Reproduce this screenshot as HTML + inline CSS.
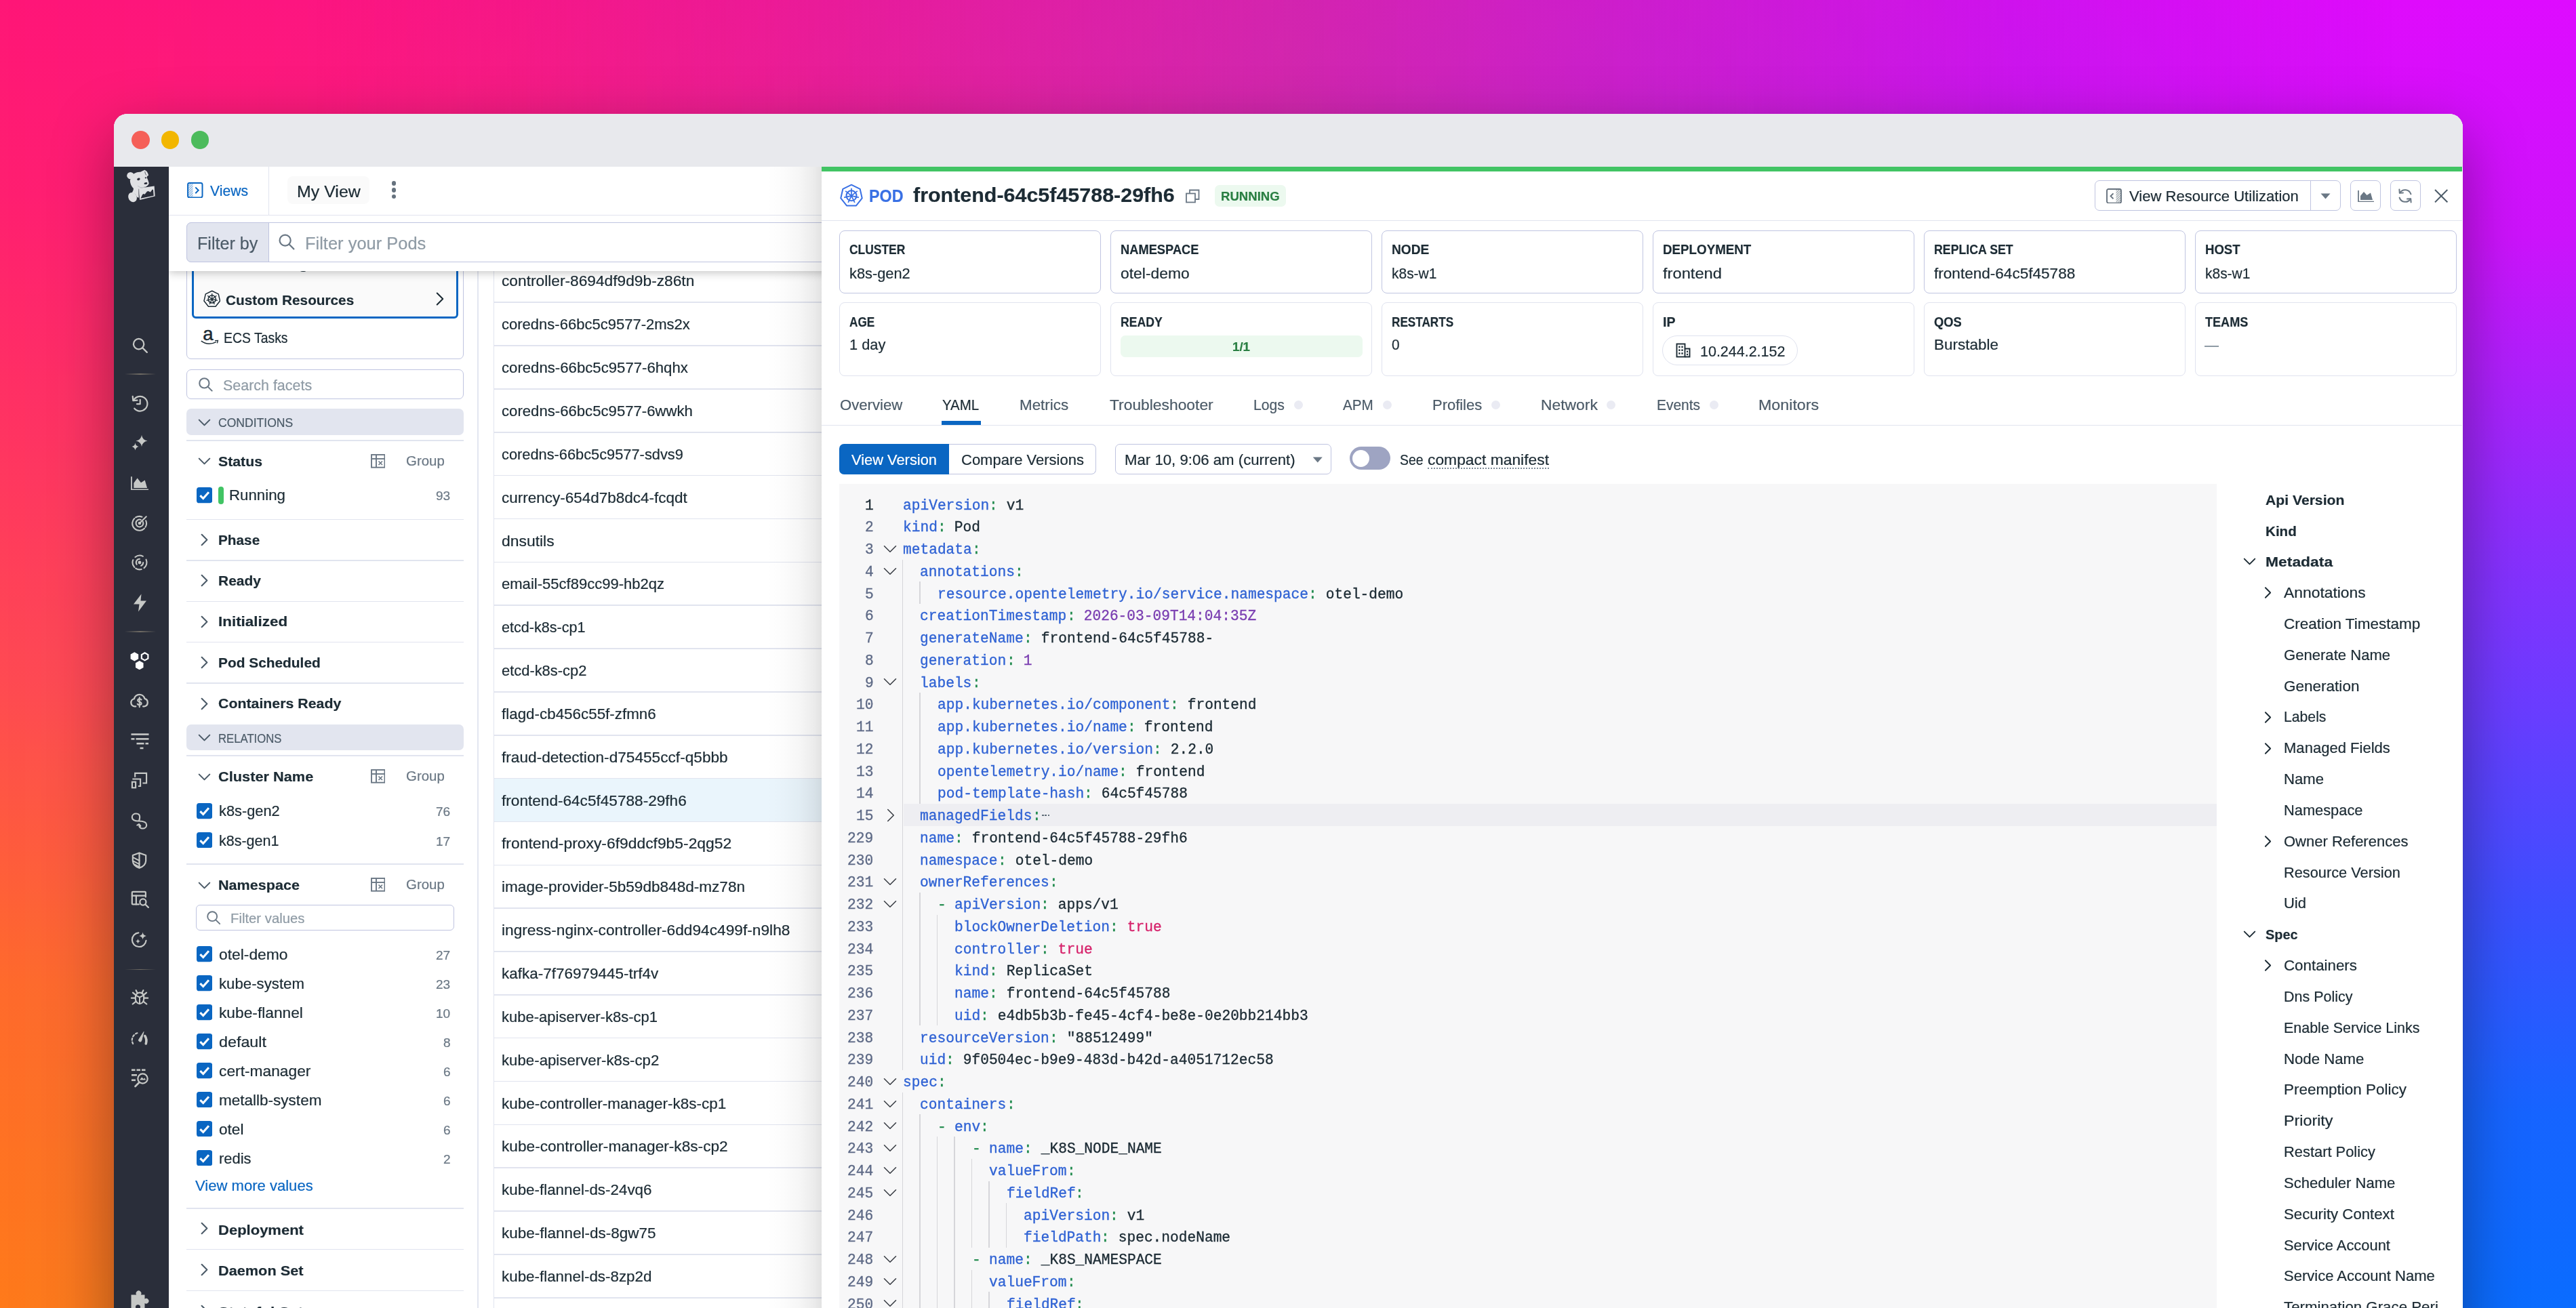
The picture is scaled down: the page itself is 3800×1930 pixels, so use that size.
<!DOCTYPE html>
<html><head><meta charset="utf-8"><title>Pod detail</title><style>
html,body{margin:0;padding:0;}
body{width:3800px;height:1930px;overflow:hidden;position:relative;font-family:"Liberation Sans",sans-serif;background:#c020d0;}
#bg,#bg2{position:absolute;left:0;top:0;width:3800px;height:1930px;}
#bg{background:linear-gradient(to bottom,#ff1677 0%,#ff1f70 15%,#ff4a52 52%,#ff6a2c 75%,#ff7a1a 100%);}
#bg2{background:linear-gradient(to bottom,#de0bff 0%,#cc13fb 18%,#8e2dfd 40%,#6a3cff 54%,#3a50ff 70%,#1664ff 85%,#0a6cff 100%);-webkit-mask-image:linear-gradient(to right,rgba(0,0,0,0) 0%,rgba(0,0,0,.12) 20%,rgba(0,0,0,.5) 50%,rgba(0,0,0,.9) 80%,#000 97%);mask-image:linear-gradient(to right,rgba(0,0,0,0) 0%,rgba(0,0,0,.12) 20%,rgba(0,0,0,.5) 50%,rgba(0,0,0,.9) 80%,#000 97%);}
#bg3{position:absolute;left:0;top:0;width:3800px;height:420px;background:linear-gradient(to right,rgba(160,80,140,0) 12%,rgba(160,80,140,.12) 30%,rgba(155,80,150,.32) 50%,rgba(140,65,195,.30) 64%,rgba(120,50,235,.18) 78%,rgba(120,50,240,0) 93%);-webkit-mask-image:linear-gradient(to bottom,#000 0%,#000 45%,rgba(0,0,0,0) 100%);}
.b{position:absolute;display:block;}
.t{position:absolute;white-space:nowrap;transform-origin:0 0;font-kerning:normal;-webkit-text-stroke:0.22px currentColor;}
.m{position:absolute;white-space:pre;font-family:"Liberation Mono",monospace;font-size:21.2px;line-height:32px;-webkit-text-stroke:0.35px currentColor;transform-origin:0 0;transform:scaleX(1.0004);}
</style></head><body>
<div id="bg"></div><div id="bg2"></div><div id="bg3"></div>
<div class="b" style="left:167.50px;top:168.00px;width:3465.00px;height:1900.00px;background:#fff;border-radius:20px 20px 0 0;box-shadow:0 30px 90px 0px rgba(0,0,0,.36);"></div>
<div class="b" style="left:167.50px;top:168.00px;width:3465.00px;height:79.00px;background:#e8e9ed;border-radius:20px 20px 0 0;"></div>
<div class="b" style="left:194.00px;top:193.30px;width:26.60px;height:26.60px;background:#f55f58;border-radius:14px;"></div>
<div class="b" style="left:237.90px;top:193.30px;width:26.60px;height:26.60px;background:#f2b600;border-radius:14px;"></div>
<div class="b" style="left:281.70px;top:193.30px;width:26.60px;height:26.60px;background:#4cbb5c;border-radius:14px;"></div>
<div class="b" style="left:167.50px;top:246.00px;width:81.00px;height:1700.00px;background:#2a2e3a;"></div>
<div class="b" style="left:275.40px;top:380.00px;width:408.50px;height:150.10px;border:1.5px solid #bfc4e0;border-radius:7px;box-sizing:border-box;"></div>
<div class="b" style="left:283.30px;top:380.00px;width:392.50px;height:90.00px;background:#fafafa;border:3px solid #0a66c2;border-radius:6px;box-sizing:border-box;"></div>
<svg class="b" style="left:299.95px;top:428.45px;" width="25.50" height="25.50" viewBox="0 0 24 24"><g fill="none" stroke="#1c2b34" stroke-width="1.41" stroke-linejoin="round"><polygon points="12.00,1.20 20.91,5.49 23.11,15.14 16.95,22.87 7.05,22.87 0.89,15.14 3.09,5.49"/><circle cx="12" cy="12.6" r="5.3"/><g stroke-width="1.20"><line x1="12" y1="12.6" x2="12.00" y2="4.70"/><line x1="12" y1="12.6" x2="18.18" y2="7.67"/><line x1="12" y1="12.6" x2="19.70" y2="14.36"/><line x1="12" y1="12.6" x2="15.43" y2="19.72"/><line x1="12" y1="12.6" x2="8.57" y2="19.72"/><line x1="12" y1="12.6" x2="4.30" y2="14.36"/><line x1="12" y1="12.6" x2="5.82" y2="7.67"/></g></g></svg>
<span class="t" style="left:333.00px;top:428.00px;font-size:20.65px;line-height:29px;color:#1c2b34;transform:scaleX(1.0058);font-weight:700;">Custom Resources</span>
<svg class="b" style="left:631.50px;top:424.20px;" width="34.00" height="34.00" viewBox="-17 -17 34 34"><polyline points="-4.25,-8.5 4.25,0 -4.25,8.5" fill="none" stroke="#1c2b34" stroke-width="2.1" stroke-linecap="round" stroke-linejoin="round"/></svg>
<span class="t" style="left:441.00px;top:375.00px;font-size:20.65px;line-height:29px;color:#1c2b34;transform:scaleX(1.0300);font-weight:700;">g</span>
<svg class="b" style="left:296.00px;top:483.00px;" width="27.00" height="28.00" viewBox="0 0 27 28"><text x="3.2" y="18.6" font-family="Liberation Sans" font-weight="400" font-size="27.5" fill="#1c2b34" stroke="#1c2b34" stroke-width="0.5">a</text><path d="M0.8 20.2 Q11 27.5 22.8 21.6" fill="none" stroke="#1c2b34" stroke-width="1.6"/><path d="M21 19.6l4.4 -0.2-1 4" fill="none" stroke="#1c2b34" stroke-width="1.4"/></svg>
<span class="t" style="left:329.90px;top:484.00px;font-size:21.17px;line-height:30px;color:#1c2b34;transform:scaleX(0.9172);">ECS Tasks</span>
<div class="b" style="left:275.40px;top:545.00px;width:408.50px;height:44.30px;border:1.5px solid #bfc4e0;border-radius:7px;box-sizing:border-box;"></div>
<svg class="b" style="left:291.55px;top:556.25px;" width="22.50" height="22.50" viewBox="0 0 24 24"><circle cx="10" cy="10" r="7.6" fill="none" stroke="#6b7885" stroke-width="2.24"/><line x1="15.6" y1="15.6" x2="22" y2="22" stroke="#6b7885" stroke-width="2.24" stroke-linecap="round"/></svg>
<span class="t" style="left:329.10px;top:554.00px;font-size:21.17px;line-height:30px;color:#8f9ba5;transform:scaleX(1.0136);">Search facets</span>
<div class="b" style="left:275.40px;top:603.30px;width:408.50px;height:38.40px;background:#e2e5ef;border-radius:7px;"></div>
<svg class="b" style="left:285.50px;top:607.50px;" width="31.00" height="31.00" viewBox="-15.5 -15.5 31.0 31.0"><polyline points="-7.75,-3.875 0,3.875 7.75,-3.875" fill="none" stroke="#4c5b68" stroke-width="2.1" stroke-linecap="round" stroke-linejoin="round"/></svg>
<span class="t" style="left:321.50px;top:612.00px;font-size:18.14px;line-height:25px;color:#4c5b68;transform:scaleX(0.9686);">CONDITIONS</span>
<div class="b" style="left:275.40px;top:649.20px;width:408.50px;height:1.50px;background:#e1e4ef;"></div>
<svg class="b" style="left:285.50px;top:665.10px;" width="31.00" height="31.00" viewBox="-15.5 -15.5 31.0 31.0"><polyline points="-7.75,-3.875 0,3.875 7.75,-3.875" fill="none" stroke="#4c5b68" stroke-width="2.1" stroke-linecap="round" stroke-linejoin="round"/></svg>
<span class="t" style="left:321.50px;top:666.00px;font-size:20.65px;line-height:29px;color:#1c2b34;transform:scaleX(1.0299);font-weight:700;">Status</span>
<svg class="b" style="left:546.50px;top:670.10px;" width="21.50" height="20.70" viewBox="0 0 21.5 20.7"><g fill="none" stroke="#6b7885" stroke-width="1.9"><rect x="1" y="1" width="19.5" height="18.7"/><line x1="1" y1="7" x2="20.5" y2="7"/><line x1="8" y1="1" x2="8" y2="19.7"/><path d="M11.5 10.5l5.5 5.5M17 10.5l-5.5 5.5" stroke-width="1.7"/></g></svg>
<span class="t" style="left:598.90px;top:666.00px;font-size:19.68px;line-height:28px;color:#6b7885;transform:scaleX(1.0385);">Group</span>
<svg class="b" style="left:289.50px;top:719.40px;" width="23.30" height="23.30" viewBox="0 0 24 24"><rect x="0" y="0" width="24" height="24" rx="4" fill="#0a66c2"/><polyline points="5.5,12.5 10,17 18.5,7.5" fill="none" stroke="#fff" stroke-width="3.2" stroke-linecap="butt" stroke-linejoin="miter"/></svg>
<div class="b" style="left:322.40px;top:718.00px;width:7.80px;height:25.70px;background:#41c464;border-radius:4px;"></div>
<span class="t" style="left:338.10px;top:716.00px;font-size:21.17px;line-height:30px;color:#1c2b34;transform:scaleX(1.0525);">Running</span>
<span class="t" style="left:642.93px;top:720.00px;font-size:18.14px;line-height:25px;color:#6b7885;transform:scaleX(1.0540);">93</span>
<div class="b" style="left:275.40px;top:765.70px;width:408.50px;height:1.50px;background:#e1e4ef;"></div>
<svg class="b" style="left:285.50px;top:780.90px;" width="31.00" height="31.00" viewBox="-15.5 -15.5 31.0 31.0"><polyline points="-3.875,-7.75 3.875,0 -3.875,7.75" fill="none" stroke="#4c5b68" stroke-width="2.1" stroke-linecap="round" stroke-linejoin="round"/></svg>
<span class="t" style="left:321.50px;top:782.00px;font-size:20.65px;line-height:29px;color:#1c2b34;transform:scaleX(1.0059);font-weight:700;">Phase</span>
<div class="b" style="left:275.40px;top:826.10px;width:408.50px;height:1.50px;background:#e1e4ef;"></div>
<svg class="b" style="left:285.50px;top:841.30px;" width="31.00" height="31.00" viewBox="-15.5 -15.5 31.0 31.0"><polyline points="-3.875,-7.75 3.875,0 -3.875,7.75" fill="none" stroke="#4c5b68" stroke-width="2.1" stroke-linecap="round" stroke-linejoin="round"/></svg>
<span class="t" style="left:321.50px;top:842.00px;font-size:20.65px;line-height:29px;color:#1c2b34;transform:scaleX(1.0148);font-weight:700;">Ready</span>
<div class="b" style="left:275.40px;top:886.50px;width:408.50px;height:1.50px;background:#e1e4ef;"></div>
<svg class="b" style="left:285.50px;top:901.70px;" width="31.00" height="31.00" viewBox="-15.5 -15.5 31.0 31.0"><polyline points="-3.875,-7.75 3.875,0 -3.875,7.75" fill="none" stroke="#4c5b68" stroke-width="2.1" stroke-linecap="round" stroke-linejoin="round"/></svg>
<span class="t" style="left:321.50px;top:902.00px;font-size:20.65px;line-height:29px;color:#1c2b34;transform:scaleX(1.0863);font-weight:700;">Initialized</span>
<div class="b" style="left:275.40px;top:946.90px;width:408.50px;height:1.50px;background:#e1e4ef;"></div>
<svg class="b" style="left:285.50px;top:962.10px;" width="31.00" height="31.00" viewBox="-15.5 -15.5 31.0 31.0"><polyline points="-3.875,-7.75 3.875,0 -3.875,7.75" fill="none" stroke="#4c5b68" stroke-width="2.1" stroke-linecap="round" stroke-linejoin="round"/></svg>
<span class="t" style="left:321.50px;top:963.00px;font-size:20.65px;line-height:29px;color:#1c2b34;transform:scaleX(1.0110);font-weight:700;">Pod Scheduled</span>
<div class="b" style="left:275.40px;top:1007.30px;width:408.50px;height:1.50px;background:#e1e4ef;"></div>
<svg class="b" style="left:285.50px;top:1022.50px;" width="31.00" height="31.00" viewBox="-15.5 -15.5 31.0 31.0"><polyline points="-3.875,-7.75 3.875,0 -3.875,7.75" fill="none" stroke="#4c5b68" stroke-width="2.1" stroke-linecap="round" stroke-linejoin="round"/></svg>
<span class="t" style="left:321.50px;top:1023.00px;font-size:20.65px;line-height:29px;color:#1c2b34;transform:scaleX(1.0332);font-weight:700;">Containers Ready</span>
<div class="b" style="left:275.40px;top:1068.90px;width:408.50px;height:38.40px;background:#e2e5ef;border-radius:7px;"></div>
<svg class="b" style="left:285.50px;top:1073.10px;" width="31.00" height="31.00" viewBox="-15.5 -15.5 31.0 31.0"><polyline points="-7.75,-3.875 0,3.875 7.75,-3.875" fill="none" stroke="#4c5b68" stroke-width="2.1" stroke-linecap="round" stroke-linejoin="round"/></svg>
<span class="t" style="left:321.50px;top:1078.00px;font-size:18.14px;line-height:25px;color:#4c5b68;transform:scaleX(0.9214);">RELATIONS</span>
<div class="b" style="left:275.40px;top:1114.00px;width:408.50px;height:1.50px;background:#e1e4ef;"></div>
<svg class="b" style="left:285.50px;top:1131.00px;" width="31.00" height="31.00" viewBox="-15.5 -15.5 31.0 31.0"><polyline points="-7.75,-3.875 0,3.875 7.75,-3.875" fill="none" stroke="#4c5b68" stroke-width="2.1" stroke-linecap="round" stroke-linejoin="round"/></svg>
<span class="t" style="left:321.50px;top:1131.00px;font-size:20.65px;line-height:29px;color:#1c2b34;transform:scaleX(1.0539);font-weight:700;">Cluster Name</span>
<svg class="b" style="left:546.50px;top:1135.00px;" width="21.50" height="20.70" viewBox="0 0 21.5 20.7"><g fill="none" stroke="#6b7885" stroke-width="1.9"><rect x="1" y="1" width="19.5" height="18.7"/><line x1="1" y1="7" x2="20.5" y2="7"/><line x1="8" y1="1" x2="8" y2="19.7"/><path d="M11.5 10.5l5.5 5.5M17 10.5l-5.5 5.5" stroke-width="1.7"/></g></svg>
<span class="t" style="left:598.90px;top:1131.00px;font-size:19.68px;line-height:28px;color:#6b7885;transform:scaleX(1.0385);">Group</span>
<svg class="b" style="left:289.50px;top:1185.40px;" width="23.30" height="23.30" viewBox="0 0 24 24"><rect x="0" y="0" width="24" height="24" rx="4" fill="#0a66c2"/><polyline points="5.5,12.5 10,17 18.5,7.5" fill="none" stroke="#fff" stroke-width="3.2" stroke-linecap="butt" stroke-linejoin="miter"/></svg>
<span class="t" style="left:323.00px;top:1182.00px;font-size:21.17px;line-height:30px;color:#1c2b34;transform:scaleX(1.0300);">k8s-gen2</span>
<span class="t" style="left:642.93px;top:1186.00px;font-size:18.14px;line-height:25px;color:#6b7885;transform:scaleX(1.0540);">76</span>
<svg class="b" style="left:289.50px;top:1228.20px;" width="23.30" height="23.30" viewBox="0 0 24 24"><rect x="0" y="0" width="24" height="24" rx="4" fill="#0a66c2"/><polyline points="5.5,12.5 10,17 18.5,7.5" fill="none" stroke="#fff" stroke-width="3.2" stroke-linecap="butt" stroke-linejoin="miter"/></svg>
<span class="t" style="left:323.00px;top:1226.00px;font-size:21.17px;line-height:30px;color:#1c2b34;transform:scaleX(1.0162);">k8s-gen1</span>
<span class="t" style="left:642.93px;top:1230.00px;font-size:18.14px;line-height:25px;color:#6b7885;transform:scaleX(1.0540);">17</span>
<div class="b" style="left:275.40px;top:1274.00px;width:408.50px;height:1.50px;background:#e1e4ef;"></div>
<svg class="b" style="left:285.50px;top:1291.00px;" width="31.00" height="31.00" viewBox="-15.5 -15.5 31.0 31.0"><polyline points="-7.75,-3.875 0,3.875 7.75,-3.875" fill="none" stroke="#4c5b68" stroke-width="2.1" stroke-linecap="round" stroke-linejoin="round"/></svg>
<span class="t" style="left:321.50px;top:1291.00px;font-size:20.65px;line-height:29px;color:#1c2b34;transform:scaleX(1.0453);font-weight:700;">Namespace</span>
<svg class="b" style="left:546.50px;top:1295.00px;" width="21.50" height="20.70" viewBox="0 0 21.5 20.7"><g fill="none" stroke="#6b7885" stroke-width="1.9"><rect x="1" y="1" width="19.5" height="18.7"/><line x1="1" y1="7" x2="20.5" y2="7"/><line x1="8" y1="1" x2="8" y2="19.7"/><path d="M11.5 10.5l5.5 5.5M17 10.5l-5.5 5.5" stroke-width="1.7"/></g></svg>
<span class="t" style="left:598.90px;top:1291.00px;font-size:19.68px;line-height:28px;color:#6b7885;transform:scaleX(1.0385);">Group</span>
<div class="b" style="left:288.60px;top:1335.30px;width:381.70px;height:37.30px;border:1.5px solid #bfc4e0;border-radius:6px;box-sizing:border-box;"></div>
<svg class="b" style="left:304.00px;top:1343.00px;" width="22.00" height="22.00" viewBox="0 0 24 24"><circle cx="10" cy="10" r="7.6" fill="none" stroke="#6b7885" stroke-width="2.07"/><line x1="15.6" y1="15.6" x2="22" y2="22" stroke="#6b7885" stroke-width="2.07" stroke-linecap="round"/></svg>
<span class="t" style="left:339.60px;top:1341.00px;font-size:19.68px;line-height:28px;color:#8f9ba5;transform:scaleX(1.0322);">Filter values</span>
<svg class="b" style="left:289.50px;top:1396.40px;" width="23.30" height="23.30" viewBox="0 0 24 24"><rect x="0" y="0" width="24" height="24" rx="4" fill="#0a66c2"/><polyline points="5.5,12.5 10,17 18.5,7.5" fill="none" stroke="#fff" stroke-width="3.2" stroke-linecap="butt" stroke-linejoin="miter"/></svg>
<span class="t" style="left:323.00px;top:1394.00px;font-size:21.17px;line-height:30px;color:#1c2b34;transform:scaleX(1.0793);">otel-demo</span>
<span class="t" style="left:642.93px;top:1398.00px;font-size:18.14px;line-height:25px;color:#6b7885;transform:scaleX(1.0540);">27</span>
<svg class="b" style="left:289.50px;top:1439.36px;" width="23.30" height="23.30" viewBox="0 0 24 24"><rect x="0" y="0" width="24" height="24" rx="4" fill="#0a66c2"/><polyline points="5.5,12.5 10,17 18.5,7.5" fill="none" stroke="#fff" stroke-width="3.2" stroke-linecap="butt" stroke-linejoin="miter"/></svg>
<span class="t" style="left:323.00px;top:1437.00px;font-size:21.17px;line-height:30px;color:#1c2b34;transform:scaleX(1.0500);">kube-system</span>
<span class="t" style="left:642.93px;top:1441.00px;font-size:18.14px;line-height:25px;color:#6b7885;transform:scaleX(1.0540);">23</span>
<svg class="b" style="left:289.50px;top:1482.32px;" width="23.30" height="23.30" viewBox="0 0 24 24"><rect x="0" y="0" width="24" height="24" rx="4" fill="#0a66c2"/><polyline points="5.5,12.5 10,17 18.5,7.5" fill="none" stroke="#fff" stroke-width="3.2" stroke-linecap="butt" stroke-linejoin="miter"/></svg>
<span class="t" style="left:323.00px;top:1480.00px;font-size:21.17px;line-height:30px;color:#1c2b34;transform:scaleX(1.0751);">kube-flannel</span>
<span class="t" style="left:642.93px;top:1484.00px;font-size:18.14px;line-height:25px;color:#6b7885;transform:scaleX(1.0540);">10</span>
<svg class="b" style="left:289.50px;top:1525.28px;" width="23.30" height="23.30" viewBox="0 0 24 24"><rect x="0" y="0" width="24" height="24" rx="4" fill="#0a66c2"/><polyline points="5.5,12.5 10,17 18.5,7.5" fill="none" stroke="#fff" stroke-width="3.2" stroke-linecap="butt" stroke-linejoin="miter"/></svg>
<span class="t" style="left:323.00px;top:1523.00px;font-size:21.17px;line-height:30px;color:#1c2b34;transform:scaleX(1.1013);">default</span>
<span class="t" style="left:653.57px;top:1527.00px;font-size:18.14px;line-height:25px;color:#6b7885;transform:scaleX(1.0540);">8</span>
<svg class="b" style="left:289.50px;top:1568.24px;" width="23.30" height="23.30" viewBox="0 0 24 24"><rect x="0" y="0" width="24" height="24" rx="4" fill="#0a66c2"/><polyline points="5.5,12.5 10,17 18.5,7.5" fill="none" stroke="#fff" stroke-width="3.2" stroke-linecap="butt" stroke-linejoin="miter"/></svg>
<span class="t" style="left:323.00px;top:1566.00px;font-size:21.17px;line-height:30px;color:#1c2b34;transform:scaleX(1.0763);">cert-manager</span>
<span class="t" style="left:653.57px;top:1570.00px;font-size:18.14px;line-height:25px;color:#6b7885;transform:scaleX(1.0540);">6</span>
<svg class="b" style="left:289.50px;top:1611.20px;" width="23.30" height="23.30" viewBox="0 0 24 24"><rect x="0" y="0" width="24" height="24" rx="4" fill="#0a66c2"/><polyline points="5.5,12.5 10,17 18.5,7.5" fill="none" stroke="#fff" stroke-width="3.2" stroke-linecap="butt" stroke-linejoin="miter"/></svg>
<span class="t" style="left:323.00px;top:1609.00px;font-size:21.17px;line-height:30px;color:#1c2b34;transform:scaleX(1.0644);">metallb-system</span>
<span class="t" style="left:653.57px;top:1613.00px;font-size:18.14px;line-height:25px;color:#6b7885;transform:scaleX(1.0540);">6</span>
<svg class="b" style="left:289.50px;top:1654.16px;" width="23.30" height="23.30" viewBox="0 0 24 24"><rect x="0" y="0" width="24" height="24" rx="4" fill="#0a66c2"/><polyline points="5.5,12.5 10,17 18.5,7.5" fill="none" stroke="#fff" stroke-width="3.2" stroke-linecap="butt" stroke-linejoin="miter"/></svg>
<span class="t" style="left:323.00px;top:1652.00px;font-size:21.17px;line-height:30px;color:#1c2b34;transform:scaleX(1.0694);">otel</span>
<span class="t" style="left:653.57px;top:1656.00px;font-size:18.14px;line-height:25px;color:#6b7885;transform:scaleX(1.0540);">6</span>
<svg class="b" style="left:289.50px;top:1697.12px;" width="23.30" height="23.30" viewBox="0 0 24 24"><rect x="0" y="0" width="24" height="24" rx="4" fill="#0a66c2"/><polyline points="5.5,12.5 10,17 18.5,7.5" fill="none" stroke="#fff" stroke-width="3.2" stroke-linecap="butt" stroke-linejoin="miter"/></svg>
<span class="t" style="left:323.00px;top:1695.00px;font-size:21.17px;line-height:30px;color:#1c2b34;transform:scaleX(1.0352);">redis</span>
<span class="t" style="left:653.57px;top:1699.00px;font-size:18.14px;line-height:25px;color:#6b7885;transform:scaleX(1.0540);">2</span>
<span class="t" style="left:288.00px;top:1735.00px;font-size:21.17px;line-height:30px;color:#0a66c2;transform:scaleX(1.0426);">View more values</span>
<div class="b" style="left:275.40px;top:1782.20px;width:408.50px;height:1.50px;background:#e1e4ef;"></div>
<svg class="b" style="left:285.50px;top:1797.40px;" width="31.00" height="31.00" viewBox="-15.5 -15.5 31.0 31.0"><polyline points="-3.875,-7.75 3.875,0 -3.875,7.75" fill="none" stroke="#4c5b68" stroke-width="2.1" stroke-linecap="round" stroke-linejoin="round"/></svg>
<span class="t" style="left:321.50px;top:1800.00px;font-size:20.65px;line-height:29px;color:#1c2b34;transform:scaleX(1.0661);font-weight:700;">Deployment</span>
<div class="b" style="left:275.40px;top:1842.90px;width:408.50px;height:1.50px;background:#e1e4ef;"></div>
<svg class="b" style="left:285.50px;top:1858.10px;" width="31.00" height="31.00" viewBox="-15.5 -15.5 31.0 31.0"><polyline points="-3.875,-7.75 3.875,0 -3.875,7.75" fill="none" stroke="#4c5b68" stroke-width="2.1" stroke-linecap="round" stroke-linejoin="round"/></svg>
<span class="t" style="left:321.50px;top:1860.00px;font-size:20.65px;line-height:29px;color:#1c2b34;transform:scaleX(1.0516);font-weight:700;">Daemon Set</span>
<div class="b" style="left:275.40px;top:1903.60px;width:408.50px;height:1.50px;background:#e1e4ef;"></div>
<svg class="b" style="left:285.50px;top:1918.80px;" width="31.00" height="31.00" viewBox="-15.5 -15.5 31.0 31.0"><polyline points="-3.875,-7.75 3.875,0 -3.875,7.75" fill="none" stroke="#4c5b68" stroke-width="2.1" stroke-linecap="round" stroke-linejoin="round"/></svg>
<span class="t" style="left:321.50px;top:1921.00px;font-size:20.65px;line-height:29px;color:#1c2b34;transform:scaleX(1.1004);font-weight:700;">Stateful Set</span>
<div class="b" style="left:704.00px;top:400.00px;width:1.50px;height:1600.00px;background:#e3e6f0;"></div>
<div class="b" style="left:727.60px;top:400.00px;width:1.50px;height:1600.00px;background:#e1e4ef;"></div>
<div class="b" style="left:727.60px;top:445.45px;width:500.00px;height:1.60px;background:#e1e4ef;"></div>
<span class="t" style="left:740.00px;top:400.00px;font-size:21.17px;line-height:30px;color:#1c2b34;transform:scaleX(1.0744);">controller-8694df9d9b-z86tn</span>
<div class="b" style="left:727.60px;top:509.30px;width:500.00px;height:1.60px;background:#e1e4ef;"></div>
<span class="t" style="left:740.00px;top:464.00px;font-size:21.17px;line-height:30px;color:#1c2b34;transform:scaleX(1.0407);">coredns-66bc5c9577-2ms2x</span>
<div class="b" style="left:727.60px;top:573.15px;width:500.00px;height:1.60px;background:#e1e4ef;"></div>
<span class="t" style="left:740.00px;top:528.00px;font-size:21.17px;line-height:30px;color:#1c2b34;transform:scaleX(1.0478);">coredns-66bc5c9577-6hqhx</span>
<div class="b" style="left:727.60px;top:637.00px;width:500.00px;height:1.60px;background:#e1e4ef;"></div>
<span class="t" style="left:740.00px;top:592.00px;font-size:21.17px;line-height:30px;color:#1c2b34;transform:scaleX(1.0468);">coredns-66bc5c9577-6wwkh</span>
<div class="b" style="left:727.60px;top:700.85px;width:500.00px;height:1.60px;background:#e1e4ef;"></div>
<span class="t" style="left:740.00px;top:656.00px;font-size:21.17px;line-height:30px;color:#1c2b34;transform:scaleX(1.0305);">coredns-66bc5c9577-sdvs9</span>
<div class="b" style="left:727.60px;top:764.70px;width:500.00px;height:1.60px;background:#e1e4ef;"></div>
<span class="t" style="left:740.00px;top:720.00px;font-size:21.17px;line-height:30px;color:#1c2b34;transform:scaleX(1.0628);">currency-654d7b8dc4-fcqdt</span>
<div class="b" style="left:727.60px;top:828.55px;width:500.00px;height:1.60px;background:#e1e4ef;"></div>
<span class="t" style="left:740.00px;top:784.00px;font-size:21.17px;line-height:30px;color:#1c2b34;transform:scaleX(1.0825);">dnsutils</span>
<div class="b" style="left:727.60px;top:892.40px;width:500.00px;height:1.60px;background:#e1e4ef;"></div>
<span class="t" style="left:740.00px;top:847.00px;font-size:21.17px;line-height:30px;color:#1c2b34;transform:scaleX(1.0418);">email-55cf89cc99-hb2qz</span>
<div class="b" style="left:727.60px;top:956.25px;width:500.00px;height:1.60px;background:#e1e4ef;"></div>
<span class="t" style="left:740.00px;top:911.00px;font-size:21.17px;line-height:30px;color:#1c2b34;transform:scaleX(1.0207);">etcd-k8s-cp1</span>
<div class="b" style="left:727.60px;top:1020.10px;width:500.00px;height:1.60px;background:#e1e4ef;"></div>
<span class="t" style="left:740.00px;top:975.00px;font-size:21.17px;line-height:30px;color:#1c2b34;transform:scaleX(1.0347);">etcd-k8s-cp2</span>
<div class="b" style="left:727.60px;top:1083.95px;width:500.00px;height:1.60px;background:#e1e4ef;"></div>
<span class="t" style="left:740.00px;top:1039.00px;font-size:21.17px;line-height:30px;color:#1c2b34;transform:scaleX(1.0583);">flagd-cb456c55f-zfmn6</span>
<div class="b" style="left:727.60px;top:1147.80px;width:500.00px;height:1.60px;background:#e1e4ef;"></div>
<span class="t" style="left:740.00px;top:1103.00px;font-size:21.17px;line-height:30px;color:#1c2b34;transform:scaleX(1.0706);">fraud-detection-d75455ccf-q5bbb</span>
<div class="b" style="left:729.10px;top:1149.30px;width:500.00px;height:63.05px;background:#eaf5fc;"></div>
<div class="b" style="left:727.60px;top:1211.65px;width:500.00px;height:1.60px;background:#e1e4ef;"></div>
<span class="t" style="left:740.00px;top:1167.00px;font-size:21.17px;line-height:30px;color:#1c2b34;transform:scaleX(1.0685);">frontend-64c5f45788-29fh6</span>
<div class="b" style="left:727.60px;top:1275.50px;width:500.00px;height:1.60px;background:#e1e4ef;"></div>
<span class="t" style="left:740.00px;top:1230.00px;font-size:21.17px;line-height:30px;color:#1c2b34;transform:scaleX(1.0801);">frontend-proxy-6f9ddcf9b5-2qg52</span>
<div class="b" style="left:727.60px;top:1339.35px;width:500.00px;height:1.60px;background:#e1e4ef;"></div>
<span class="t" style="left:740.00px;top:1294.00px;font-size:21.17px;line-height:30px;color:#1c2b34;transform:scaleX(1.0675);">image-provider-5b59db848d-mz78n</span>
<div class="b" style="left:727.60px;top:1403.20px;width:500.00px;height:1.60px;background:#e1e4ef;"></div>
<span class="t" style="left:740.00px;top:1358.00px;font-size:21.17px;line-height:30px;color:#1c2b34;transform:scaleX(1.0734);">ingress-nginx-controller-6dd94c499f-n9lh8</span>
<div class="b" style="left:727.60px;top:1467.05px;width:500.00px;height:1.60px;background:#e1e4ef;"></div>
<span class="t" style="left:740.00px;top:1422.00px;font-size:21.17px;line-height:30px;color:#1c2b34;transform:scaleX(1.0624);">kafka-7f76979445-trf4v</span>
<div class="b" style="left:727.60px;top:1530.90px;width:500.00px;height:1.60px;background:#e1e4ef;"></div>
<span class="t" style="left:740.00px;top:1486.00px;font-size:21.17px;line-height:30px;color:#1c2b34;transform:scaleX(1.0402);">kube-apiserver-k8s-cp1</span>
<div class="b" style="left:727.60px;top:1594.75px;width:500.00px;height:1.60px;background:#e1e4ef;"></div>
<span class="t" style="left:740.00px;top:1550.00px;font-size:21.17px;line-height:30px;color:#1c2b34;transform:scaleX(1.0511);">kube-apiserver-k8s-cp2</span>
<div class="b" style="left:727.60px;top:1658.60px;width:500.00px;height:1.60px;background:#e1e4ef;"></div>
<span class="t" style="left:740.00px;top:1614.00px;font-size:21.17px;line-height:30px;color:#1c2b34;transform:scaleX(1.0632);">kube-controller-manager-k8s-cp1</span>
<div class="b" style="left:727.60px;top:1722.45px;width:500.00px;height:1.60px;background:#e1e4ef;"></div>
<span class="t" style="left:740.00px;top:1677.00px;font-size:21.17px;line-height:30px;color:#1c2b34;transform:scaleX(1.0709);">kube-controller-manager-k8s-cp2</span>
<div class="b" style="left:727.60px;top:1786.30px;width:500.00px;height:1.60px;background:#e1e4ef;"></div>
<span class="t" style="left:740.00px;top:1741.00px;font-size:21.17px;line-height:30px;color:#1c2b34;transform:scaleX(1.0579);">kube-flannel-ds-24vq6</span>
<div class="b" style="left:727.60px;top:1850.15px;width:500.00px;height:1.60px;background:#e1e4ef;"></div>
<span class="t" style="left:740.00px;top:1805.00px;font-size:21.17px;line-height:30px;color:#1c2b34;transform:scaleX(1.0631);">kube-flannel-ds-8gw75</span>
<div class="b" style="left:727.60px;top:1914.00px;width:500.00px;height:1.60px;background:#e1e4ef;"></div>
<span class="t" style="left:740.00px;top:1869.00px;font-size:21.17px;line-height:30px;color:#1c2b34;transform:scaleX(1.0579);">kube-flannel-ds-8zp2d</span>
<div class="b" style="left:727.60px;top:1977.85px;width:500.00px;height:1.60px;background:#e1e4ef;"></div>
<span class="t" style="left:740.00px;top:1933.00px;font-size:21.17px;line-height:30px;color:#1c2b34;transform:scaleX(1.2316);">kube-flannel-ds-x</span>
<div class="b" style="left:248.50px;top:246.00px;width:1300.00px;height:154.00px;background:#fff;box-shadow:0 3px 12px rgba(0,0,0,.22);"></div>
<div class="b" style="left:248.50px;top:316.70px;width:1300.00px;height:1.60px;background:#e1e4ef;"></div>
<div class="b" style="left:395.50px;top:246.00px;width:1.50px;height:71.00px;background:#e1e4ef;"></div>
<svg class="b" style="left:276.30px;top:268.80px;" width="23.60" height="23.60" viewBox="0 0 24 24"><defs><pattern id="hat" width="2.4" height="2.4" patternUnits="userSpaceOnUse" patternTransform="rotate(45)"><rect width="1.2" height="2.4" fill="#0a66c2" opacity=".55"/></pattern></defs><rect x="1.1" y="1.1" width="21.8" height="21.8" rx="2.5" fill="none" stroke="#0a66c2" stroke-width="2"/><rect x="2.2" y="2.2" width="6.5" height="19.6" fill="url(#hat)"/><polyline points="12.5,7.5 17,12 12.5,16.5" fill="none" stroke="#0a66c2" stroke-width="2"/></svg>
<span class="t" style="left:310.40px;top:267.00px;font-size:21.17px;line-height:30px;color:#0a66c2;transform:scaleX(0.9984);">Views</span>
<div class="b" style="left:424.00px;top:260.30px;width:120.80px;height:40.30px;background:#fafafa;border-radius:8px;"></div>
<span class="t" style="left:437.50px;top:266.00px;font-size:24.19px;line-height:34px;color:#1c2b34;transform:scaleX(1.0312);">My View</span>
<div class="b" style="left:577.60px;top:267.40px;width:6.80px;height:6.80px;background:#66727e;border-radius:4px;"></div>
<div class="b" style="left:577.60px;top:277.10px;width:6.80px;height:6.80px;background:#66727e;border-radius:4px;"></div>
<div class="b" style="left:577.60px;top:286.70px;width:6.80px;height:6.80px;background:#66727e;border-radius:4px;"></div>
<div class="b" style="left:275.40px;top:328.40px;width:121.60px;height:58.60px;background:#e2e5ef;border-radius:7px 0 0 7px;box-sizing:border-box;border-right:1.5px solid #bfc4e0;"></div>
<div class="b" style="left:275.40px;top:328.40px;width:1200.00px;height:58.60px;border:1.5px solid #bfc4e0;border-radius:7px;box-sizing:border-box;"></div>
<span class="t" style="left:291.10px;top:341.00px;font-size:25.62px;line-height:36px;color:#4c5b68;transform:scaleX(0.9801);">Filter by</span>
<svg class="b" style="left:409.85px;top:343.85px;" width="25.50" height="25.50" viewBox="0 0 24 24"><circle cx="10" cy="10" r="7.6" fill="none" stroke="#6b7885" stroke-width="2.07"/><line x1="15.6" y1="15.6" x2="22" y2="22" stroke="#6b7885" stroke-width="2.07" stroke-linecap="round"/></svg>
<span class="t" style="left:449.90px;top:341.00px;font-size:25.62px;line-height:36px;color:#8f9ba5;transform:scaleX(0.9944);">Filter your Pods</span>
<div class="b" style="left:167.50px;top:168.00px;width:3465.00px;height:78.00px;background:#e8e9ed;border-radius:20px 20px 0 0;"></div>
<div class="b" style="left:194.00px;top:193.30px;width:26.60px;height:26.60px;background:#f55f58;border-radius:14px;"></div>
<div class="b" style="left:237.90px;top:193.30px;width:26.60px;height:26.60px;background:#f2b600;border-radius:14px;"></div>
<div class="b" style="left:281.70px;top:193.30px;width:26.60px;height:26.60px;background:#4cbb5c;border-radius:14px;"></div>
<div class="b" style="left:167.50px;top:246.00px;width:81.00px;height:1700.00px;background:#2a2e3a;"></div>
<svg class="b" style="left:168.00px;top:246.00px;" width="80.00" height="80.00" viewBox="0 0 1308 1308"><g fill="#dfe0e3"><circle cx="400" cy="215" r="86"/><path d="M470 175 Q560 120 640 128 Q700 95 745 78 Q815 110 836 208 Q805 222 792 252 Q832 330 846 400 Q832 452 792 472 Q760 502 700 517 L592 527 L602 745 Q565 748 552 722 Q522 640 436 628 Q482 560 470 520 Q398 450 388 330 Q420 250 470 175Z"/><ellipse cx="450" cy="737" rx="100" ry="120" transform="rotate(-28 450 737)"/><polygon points="588,522 975,468 992,712 625,802"/></g><g fill="#2a2e3a"><polygon points="645,764 690,672 715,655 745,667 800,598 830,588 880,614 930,548 948,556 960,700"/><ellipse cx="595" cy="300" rx="38" ry="27" transform="rotate(-18 595 300)"/><ellipse cx="766" cy="268" rx="20" ry="15" transform="rotate(30 766 268)"/><ellipse cx="768" cy="402" rx="40" ry="24" transform="rotate(-8 768 402)"/><path d="M748 118 Q752 170 782 205" fill="none" stroke="#2a2e3a" stroke-width="12"/><path d="M600 535 L612 740" fill="none" stroke="#2a2e3a" stroke-width="7"/><path d="M575 462 Q640 520 700 505 Q740 490 760 470" fill="none" stroke="#2a2e3a" stroke-width="6" opacity=".6"/></g></svg>
<svg class="b" style="left:193.85px;top:497.25px;" width="25.50" height="25.50" viewBox="0 0 24 24"><g fill="none" stroke="#c6c8c6" stroke-width="1.9" stroke-linecap="round" stroke-linejoin="round"><circle cx="10" cy="10" r="7.2" stroke-width="2.1"/><line x1="15.4" y1="15.4" x2="21.5" y2="21.5" stroke-width="2.1"/></g></svg>
<div class="b" style="left:184.00px;top:551.20px;width:46.00px;height:1.60px;background:linear-gradient(to right,rgba(120,115,105,0),rgba(120,115,105,.9) 50%,rgba(120,115,105,0));"></div>
<svg class="b" style="left:192.20px;top:580.80px;" width="28.00" height="28.00" viewBox="0 0 24 24"><g fill="none" stroke="#c6c8c6" stroke-width="1.9" stroke-linecap="round" stroke-linejoin="round"><path d="M4.4 8A9.3 9.3 0 1 1 5.4 18.6"/><polyline points="3.2,3.4 3.7,8.7 9,8.2"/><polyline points="12.6,7.6 12.6,13 8.6,13"/></g></svg>
<svg class="b" style="left:192.20px;top:640.30px;" width="27.00" height="27.00" viewBox="0 0 27 27"><g fill="#c6c8c6"><path d="M17 2 Q18 9 25.5 10.5 Q18 12 17 19 Q16 12 8.5 10.5 Q16 9 17 2Z"/><path d="M7.5 13.5 Q8.2 18 12.5 19 Q8.2 20 7.5 24.5 Q6.8 20 2.5 19 Q6.8 18 7.5 13.5Z"/></g></svg>
<svg class="b" style="left:193.00px;top:702.50px;" width="26.00" height="20.50" viewBox="0 0 27 21"><path d="M1 0V20H27" fill="none" stroke="#c6c8c6" stroke-width="1.9"/><path d="M4.5 17.5V10L10 2.5L15.5 9.5L21.5 5.5L25 17.5Z" fill="#c6c8c6"/></svg>
<svg class="b" style="left:192.90px;top:758.60px;" width="26.00" height="26.00" viewBox="0 0 24 24"><g fill="none" stroke="#c6c8c6" stroke-width="1.9" stroke-linecap="round" stroke-linejoin="round"><path d="M20.5 8.6A9.6 9.6 0 1 1 15.2 3.4" stroke-dasharray="9 2.2 30 2.2 100"/><path d="M16.6 10.2A5 5 0 1 1 13.6 7.3"/><line x1="12" y1="12" x2="21" y2="3"/><circle cx="12" cy="12" r="1.2" fill="#c6c8c6"/></g></svg>
<svg class="b" style="left:192.90px;top:817.30px;" width="26.00" height="26.00" viewBox="0 0 24 24"><g fill="none" stroke="#c6c8c6" stroke-width="1.9" stroke-linecap="round" stroke-linejoin="round"><path d="M20.8 8A9.6 9.6 0 0 1 18 19.5" /><path d="M14.5 21.2A9.6 9.6 0 0 1 3 8.5" stroke-dasharray="8 2.4 20"/><path d="M6 4.6A9.6 9.6 0 0 1 16.5 3.5"/><path d="M16.8 12A4.8 4.8 0 0 1 14 16.4"/><path d="M8 14.6A4.8 4.8 0 0 1 12 7.2"/><circle cx="12" cy="12" r="1.3" fill="#c6c8c6"/></g></svg>
<svg class="b" style="left:195.60px;top:876.00px;" width="21.00" height="27.00" viewBox="0 0 21 27"><path d="M12.5 0.5L1 15.5H9.5L8 26.5L20 10.5H11.5Z" fill="#c6c8c6"/></svg>
<div class="b" style="left:184.00px;top:931.20px;width:46.00px;height:1.60px;background:linear-gradient(to right,rgba(120,115,105,0),rgba(120,115,105,.9) 50%,rgba(120,115,105,0));"></div>
<svg class="b" style="left:190.80px;top:960.80px;" width="29.50" height="27.50" viewBox="0 0 30 28"><polygon points="13.39,11.40 7.50,14.80 1.61,11.40 1.61,4.60 7.50,1.20 13.39,4.60" fill="#fff"/><polygon points="20.89,24.40 15.00,27.80 9.11,24.40 9.11,17.60 15.00,14.20 20.89,17.60" fill="#fff"/><polygon points="27.85,10.80 23.00,13.60 18.15,10.80 18.15,5.20 23.00,2.40 27.85,5.20" fill="none" stroke="#fff" stroke-width="2.2"/></svg>
<svg class="b" style="left:191.15px;top:1019.25px;" width="29.50" height="29.50" viewBox="0 0 24 24"><g fill="none" stroke="#c6c8c6" stroke-width="1.9" stroke-linecap="round" stroke-linejoin="round"><path d="M7.5 19H6.2A4.6 4.6 0 0 1 5.6 9.9A6.5 6.5 0 0 1 18.2 9.6A4.8 4.8 0 0 1 17.6 19H16.4"/><path d="M14.3 10.9C13.4 9.6 9.9 9.7 9.9 11.8C9.9 14 14.3 13.1 14.3 15.4C14.3 17.6 10.4 17.6 9.6 16.1" stroke-width="1.7"/><line x1="12" y1="8.2" x2="12" y2="19.8" stroke-width="1.6"/></g></svg>
<svg class="b" style="left:192.60px;top:1079.80px;" width="27.00" height="27.50" viewBox="0 0 27 26"><g fill="#c6c8c6"><rect x="0.5" y="1.5" width="26" height="2.6"/><rect x="0.5" y="8.3" width="5" height="2.6"/><rect x="7.5" y="8.3" width="19" height="2.6"/><rect x="8.5" y="15.1" width="11" height="2.6"/><rect x="21.5" y="15.1" width="4.5" height="2.6"/><rect x="13.5" y="21.9" width="5" height="2.6"/></g></svg>
<svg class="b" style="left:192.40px;top:1137.50px;" width="27.00" height="27.00" viewBox="0 0 24 24"><g fill="none" stroke="#c6c8c6" stroke-width="1.9" stroke-linecap="round" stroke-linejoin="round"><polyline points="6.4,7.8 6.4,2.6 21.4,2.6 21.4,15.6 16.4,15.6" stroke-linecap="butt" stroke-linejoin="miter"/><polyline points="3,10.2 13.4,10.2 13.4,19.6 10.6,19.6" stroke-linecap="butt" stroke-linejoin="miter"/><rect x="2.6" y="14" width="4.6" height="7.6" stroke-linejoin="miter"/></g></svg>
<svg class="b" style="left:192.40px;top:1197.50px;" width="27.00" height="27.00" viewBox="0 0 24 24"><g fill="none" stroke="#c6c8c6" stroke-width="1.9" stroke-linecap="round" stroke-linejoin="round"><path d="M11.5 12C6 12 2.5 10.4 2.5 6.9C2.5 3.6 5.2 2.2 7.8 2.2C10.6 2.2 12.6 3.8 12.6 6.6C12.6 8.8 12 10.6 11.5 12C15.5 12 21.5 13 21.5 17C21.5 20.4 18.8 21.8 16.4 21.8C13.4 21.8 11.6 19.6 11.8 17.2"/><polyline points="9.2,17.4 11.8,16 13.6,18.6"/></g></svg>
<svg class="b" style="left:192.40px;top:1256.10px;" width="27.00" height="27.00" viewBox="0 0 24 24"><g fill="none" stroke="#c6c8c6" stroke-width="1.9" stroke-linecap="round" stroke-linejoin="round"><path d="M12 2.2L20.6 5.4V12C20.6 17.2 16.8 20.4 12 22C7.2 20.4 3.4 17.2 3.4 12V5.4Z"/><line x1="12" y1="2.4" x2="12" y2="21.8"/><path d="M3.8 8.2L12 12.4M3.8 12.8L12 17M6 17.4L12 20.6" stroke-width="1.7"/></g></svg>
<svg class="b" style="left:191.90px;top:1313.30px;" width="28.00" height="28.00" viewBox="0 0 24 24"><g fill="none" stroke="#c6c8c6" stroke-width="1.9" stroke-linecap="round" stroke-linejoin="round"><path d="M11 18.4H3.4A1 1 0 0 1 2.4 17.4V3.4A1 1 0 0 1 3.4 2.4H18.6A1 1 0 0 1 19.6 3.4V9" stroke-linejoin="miter"/><line x1="2.4" y1="7.4" x2="19.6" y2="7.4"/><line x1="7.6" y1="7.4" x2="7.6" y2="18.4"/><circle cx="16.2" cy="15.4" r="3.9"/><line x1="19.2" y1="18.4" x2="23" y2="22.2"/></g></svg>
<svg class="b" style="left:192.40px;top:1372.90px;" width="27.00" height="27.00" viewBox="0 0 24 24"><g fill="none" stroke="#c6c8c6" stroke-width="1.9" stroke-linecap="round" stroke-linejoin="round"><path d="M20.9 13.2A9.2 9.2 0 1 1 11 3"/><polyline points="20.6,18.6 21,13.2 16,13.6" stroke-width="0"/><path d="M16.5 2.2Q17.1 6.3 21.2 7Q17.1 7.7 16.5 11.8Q15.9 7.7 11.8 7Q15.9 6.3 16.5 2.2Z" fill="#c6c8c6" stroke="none"/><path d="M10.2 11Q10.6 13.6 13.2 14Q10.6 14.4 10.2 17Q9.8 14.4 7.2 14Q9.8 13.6 10.2 11Z" fill="#c6c8c6" stroke="none"/></g></svg>
<div class="b" style="left:184.00px;top:1429.60px;width:46.00px;height:1.60px;background:linear-gradient(to right,rgba(120,115,105,0),rgba(120,115,105,.9) 50%,rgba(120,115,105,0));"></div>
<svg class="b" style="left:191.90px;top:1456.50px;" width="28.00" height="28.00" viewBox="0 0 24 24"><g fill="none" stroke="#c6c8c6" stroke-width="1.9" stroke-linecap="round" stroke-linejoin="round"><path d="M12 6.6C15.4 6.6 17.4 9.2 17.4 13.4C17.4 17.6 15.2 20.6 12 20.6C8.8 20.6 6.6 17.6 6.6 13.4C6.6 9.2 8.6 6.6 12 6.6Z"/><path d="M7.4 10.2L12 12.6L16.6 10.2M12 12.6V20.4" stroke-width="1.7"/><path d="M9.2 7.2L7.4 3.6M14.8 7.2L16.6 3.6M6.6 13.4H1.6M17.4 13.4H22.4M7.4 17.6L3.2 21M16.6 17.6L20.8 21M7.2 9.8L3.4 6.6M16.8 9.8L20.6 6.6"/></g></svg>
<svg class="b" style="left:192.15px;top:1517.95px;" width="27.50" height="27.50" viewBox="0 0 24 24"><g fill="none" stroke="#c6c8c6" stroke-width="1.9" stroke-linecap="round" stroke-linejoin="round"><path d="M3.6 19.2A9.6 9.6 0 0 1 10.2 5.2" stroke-dasharray="2.3 2.5"/><path d="M19 9.2C20.9 12 21.3 15.6 20.3 19.2" stroke-width="3.1"/><path d="M17.3 4.2L11.3 13.6A1.9 1.9 0 1 0 14.6 15.4Z" fill="#c6c8c6" stroke-width="0.8"/></g></svg>
<svg class="b" style="left:193.00px;top:1576.00px;" width="28.00" height="29.00" viewBox="0 0 28 29"><g fill="#c6c8c6"><rect x="1" y="1.5" width="5.5" height="2.6"/><rect x="8.5" y="1.5" width="5.5" height="2.6"/><rect x="16" y="1.5" width="5.5" height="2.6"/><rect x="1" y="9" width="8" height="2.6"/><rect x="1" y="16.5" width="6" height="2.6"/></g><circle cx="17.5" cy="15.5" r="7.2" fill="none" stroke="#c6c8c6" stroke-width="2.2"/><line x1="12" y1="21.5" x2="6.5" y2="27" stroke="#c6c8c6" stroke-width="2.6" stroke-linecap="round"/><path d="M13 17.5L16.2 13.5L18.6 16L20.4 14.4L22 17.5Z" fill="#c6c8c6"/></svg>
<svg class="b" style="left:192.00px;top:1898.00px;" width="30.00" height="32.00" viewBox="0 0 30 32"><path d="M1.5 12.5H9.2A3.9 3.9 0 1 1 15.8 12.5H21.5V18.4A3.9 3.9 0 1 1 21.5 25V32H14.8A3.6 3.6 0 1 0 8.2 32H1.5Z" fill="#c6c8c6"/></svg>
<div class="b" style="left:1129.60px;top:246.00px;width:82.00px;height:1700.00px;background:linear-gradient(to right,rgba(0,0,0,0) 0%,rgba(0,0,0,.012) 30%,rgba(0,0,0,.035) 60%,rgba(0,0,0,.075) 85%,rgba(0,0,0,.115) 100%);"></div>
<div class="b" style="left:1211.60px;top:246.00px;width:2420.90px;height:1700.00px;background:#fff;"></div>
<div class="b" style="left:1211.60px;top:245.60px;width:2420.90px;height:7.40px;background:#41c464;"></div>
<svg class="b" style="left:1238.50px;top:271.00px;" width="34.00" height="34.00" viewBox="0 0 24 24"><g fill="none" stroke="#3970e4" stroke-width="1.41" stroke-linejoin="round"><polygon points="12.00,1.20 20.91,5.49 23.11,15.14 16.95,22.87 7.05,22.87 0.89,15.14 3.09,5.49"/><circle cx="12" cy="12.6" r="5.3"/><g stroke-width="1.20"><line x1="12" y1="12.6" x2="12.00" y2="4.70"/><line x1="12" y1="12.6" x2="18.18" y2="7.67"/><line x1="12" y1="12.6" x2="19.70" y2="14.36"/><line x1="12" y1="12.6" x2="15.43" y2="19.72"/><line x1="12" y1="12.6" x2="8.57" y2="19.72"/><line x1="12" y1="12.6" x2="4.30" y2="14.36"/><line x1="12" y1="12.6" x2="5.82" y2="7.67"/></g></g></svg>
<span class="t" style="left:1282.00px;top:272.00px;font-size:25px;line-height:35px;color:#3970e4;transform:scaleX(0.9322);font-weight:700;">POD</span>
<span class="t" style="left:1347.00px;top:267.00px;font-size:29.6px;line-height:41px;color:#1c2b34;transform:scaleX(1.0286);font-weight:700;">frontend-64c5f45788-29fh6</span>
<svg class="b" style="left:1749.00px;top:278.50px;" width="21.00" height="21.00" viewBox="0 0 21 21"><g fill="none" stroke="#6b7885" stroke-width="1.8"><rect x="1" y="6.5" width="13" height="13"/><polyline points="6,6.5 6,1.5 19.5,1.5 19.5,15 14,15"/></g></svg>
<div class="b" style="left:1791.80px;top:272.60px;width:105.40px;height:32.00px;background:#ecf9ef;border-radius:7px;"></div>
<span class="t" style="left:1801.20px;top:278.00px;font-size:17.7px;line-height:25px;color:#2a7f43;transform:scaleX(1.0497);font-weight:700;">RUNNING</span>
<div class="b" style="left:3089.70px;top:265.80px;width:362.90px;height:45.20px;border:1.7px solid #bfc4e0;border-radius:7px;box-sizing:border-box;"></div>
<div class="b" style="left:3407.60px;top:265.80px;width:1.60px;height:45.20px;background:#bfc4e0;"></div>
<svg class="b" style="left:3107.00px;top:277.80px;" width="23.00" height="22.60" viewBox="0 0 23 22.6"><defs><pattern id="hat2" width="2.4" height="2.4" patternUnits="userSpaceOnUse" patternTransform="rotate(45)"><rect width="1.2" height="2.4" fill="#4c5b68" opacity=".6"/></pattern></defs><rect x="1" y="1" width="21" height="20.6" rx="2.4" fill="none" stroke="#66727e" stroke-width="1.9"/><rect x="14.5" y="2" width="6.5" height="18.6" fill="url(#hat2)"/><polyline points="10.5,7.3 6.5,11.3 10.5,15.3" fill="none" stroke="#66727e" stroke-width="1.9"/></svg>
<span class="t" style="left:3140.90px;top:275.00px;font-size:21.17px;line-height:30px;color:#1c2b34;transform:scaleX(1.0432);">View Resource Utilization</span>
<svg class="b" style="left:3423.00px;top:285.00px;" width="15.00" height="9.00" viewBox="0 0 15 9"><path d="M0.5 0.5H14.5L7.5 8.5Z" fill="#6b7885"/></svg>
<div class="b" style="left:3467.00px;top:265.80px;width:44.80px;height:45.20px;border:1.7px solid #bfc4e0;border-radius:7px;box-sizing:border-box;"></div>
<svg class="b" style="left:3477.50px;top:280.50px;" width="24.00" height="17.50" viewBox="0 0 24 17.5"><path d="M1 0V16.6H24" fill="none" stroke="#6b7885" stroke-width="1.8"/><path d="M4 14V8L9 2L13.5 7L19 3.5L22 14Z" fill="#6b7885"/></svg>
<div class="b" style="left:3526.00px;top:265.80px;width:44.80px;height:45.20px;border:1.7px solid #bfc4e0;border-radius:7px;box-sizing:border-box;"></div>
<svg class="b" style="left:3536.40px;top:277.00px;" width="24.00" height="24.00" viewBox="0 0 24 24"><g fill="none" stroke="#6b7885" stroke-width="2" stroke-linecap="round" stroke-linejoin="round"><path d="M20.4 9.4A9 9 0 0 0 4.2 7.4"/><polyline points="3.4,2.6 3.8,7.8 9,7.4"/><path d="M3.6 14.6A9 9 0 0 0 19.8 16.6"/><polyline points="20.6,21.4 20.2,16.2 15,16.6"/></g></svg>
<svg class="b" style="left:3590.50px;top:278.60px;" width="20.40" height="20.40" viewBox="0 0 20 20"><path d="M1 1L19 19M19 1L1 19" stroke="#4c5b68" stroke-width="2" fill="none"/></svg>
<div class="b" style="left:1211.60px;top:324.80px;width:2420.90px;height:1.50px;background:#e1e4ef;"></div>
<div class="b" style="left:1237.80px;top:340.00px;width:386.00px;height:92.60px;border:1.8px solid #c0c5e1;border-radius:8px;box-sizing:border-box;"></div>
<span class="t" style="left:1253.00px;top:354.00px;font-size:20.2px;line-height:28px;color:#1c2b34;transform:scaleX(0.8638);font-weight:700;">CLUSTER</span>
<span class="t" style="left:1253.00px;top:389.00px;font-size:21.17px;line-height:30px;color:#1c2b34;transform:scaleX(1.0300);">k8s-gen2</span>
<div class="b" style="left:1637.80px;top:340.00px;width:386.00px;height:92.60px;border:1.8px solid #c0c5e1;border-radius:8px;box-sizing:border-box;"></div>
<span class="t" style="left:1653.00px;top:354.00px;font-size:20.2px;line-height:28px;color:#1c2b34;transform:scaleX(0.9061);font-weight:700;">NAMESPACE</span>
<span class="t" style="left:1653.00px;top:389.00px;font-size:21.17px;line-height:30px;color:#1c2b34;transform:scaleX(1.0824);">otel-demo</span>
<div class="b" style="left:2037.80px;top:340.00px;width:386.00px;height:92.60px;border:1.8px solid #c0c5e1;border-radius:8px;box-sizing:border-box;"></div>
<span class="t" style="left:2053.00px;top:354.00px;font-size:20.2px;line-height:28px;color:#1c2b34;transform:scaleX(0.9475);font-weight:700;">NODE</span>
<span class="t" style="left:2053.00px;top:389.00px;font-size:21.17px;line-height:30px;color:#1c2b34;transform:scaleX(0.9902);">k8s-w1</span>
<div class="b" style="left:2437.80px;top:340.00px;width:386.00px;height:92.60px;border:1.8px solid #c0c5e1;border-radius:8px;box-sizing:border-box;"></div>
<span class="t" style="left:2453.00px;top:354.00px;font-size:20.2px;line-height:28px;color:#1c2b34;transform:scaleX(0.9295);font-weight:700;">DEPLOYMENT</span>
<span class="t" style="left:2453.00px;top:389.00px;font-size:21.17px;line-height:30px;color:#1c2b34;transform:scaleX(1.1199);">frontend</span>
<div class="b" style="left:2837.80px;top:340.00px;width:386.00px;height:92.60px;border:1.8px solid #c0c5e1;border-radius:8px;box-sizing:border-box;"></div>
<span class="t" style="left:2853.00px;top:354.00px;font-size:20.2px;line-height:28px;color:#1c2b34;transform:scaleX(0.8787);font-weight:700;">REPLICA SET</span>
<span class="t" style="left:2853.00px;top:389.00px;font-size:21.17px;line-height:30px;color:#1c2b34;transform:scaleX(1.0666);">frontend-64c5f45788</span>
<div class="b" style="left:3237.80px;top:340.00px;width:386.00px;height:92.60px;border:1.8px solid #c0c5e1;border-radius:8px;box-sizing:border-box;"></div>
<span class="t" style="left:3253.00px;top:354.00px;font-size:20.2px;line-height:28px;color:#1c2b34;transform:scaleX(0.9178);font-weight:700;">HOST</span>
<span class="t" style="left:3253.00px;top:389.00px;font-size:21.17px;line-height:30px;color:#1c2b34;transform:scaleX(0.9902);">k8s-w1</span>
<div class="b" style="left:1237.80px;top:446.10px;width:386.00px;height:108.80px;border:1.5px solid #e0e3ef;border-radius:8px;box-sizing:border-box;"></div>
<span class="t" style="left:1253.00px;top:461.00px;font-size:20.2px;line-height:28px;color:#1c2b34;transform:scaleX(0.8521);font-weight:700;">AGE</span>
<span class="t" style="left:1253.00px;top:494.00px;font-size:21.17px;line-height:30px;color:#1c2b34;transform:scaleX(1.0292);">1 day</span>
<div class="b" style="left:1637.80px;top:446.10px;width:386.00px;height:108.80px;border:1.5px solid #e0e3ef;border-radius:8px;box-sizing:border-box;"></div>
<span class="t" style="left:1653.00px;top:461.00px;font-size:20.2px;line-height:28px;color:#1c2b34;transform:scaleX(0.8740);font-weight:700;">READY</span>
<div class="b" style="left:2037.80px;top:446.10px;width:386.00px;height:108.80px;border:1.5px solid #e0e3ef;border-radius:8px;box-sizing:border-box;"></div>
<span class="t" style="left:2053.00px;top:461.00px;font-size:20.2px;line-height:28px;color:#1c2b34;transform:scaleX(0.8495);font-weight:700;">RESTARTS</span>
<span class="t" style="left:2053.00px;top:494.00px;font-size:21.17px;line-height:30px;color:#1c2b34;transform:scaleX(0.9852);">0</span>
<div class="b" style="left:2437.80px;top:446.10px;width:386.00px;height:108.80px;border:1.5px solid #e0e3ef;border-radius:8px;box-sizing:border-box;"></div>
<span class="t" style="left:2453.00px;top:461.00px;font-size:20.2px;line-height:28px;color:#1c2b34;transform:scaleX(0.9693);font-weight:700;">IP</span>
<div class="b" style="left:2837.80px;top:446.10px;width:386.00px;height:108.80px;border:1.5px solid #e0e3ef;border-radius:8px;box-sizing:border-box;"></div>
<span class="t" style="left:2853.00px;top:461.00px;font-size:20.2px;line-height:28px;color:#1c2b34;transform:scaleX(0.9087);font-weight:700;">QOS</span>
<span class="t" style="left:2853.00px;top:494.00px;font-size:21.17px;line-height:30px;color:#1c2b34;transform:scaleX(1.0622);">Burstable</span>
<div class="b" style="left:3237.80px;top:446.10px;width:386.00px;height:108.80px;border:1.5px solid #e0e3ef;border-radius:8px;box-sizing:border-box;"></div>
<span class="t" style="left:3253.00px;top:461.00px;font-size:20.2px;line-height:28px;color:#1c2b34;transform:scaleX(0.8953);font-weight:700;">TEAMS</span>
<div class="b" style="left:1652.70px;top:494.70px;width:357.30px;height:32.10px;background:#ecf9ef;border-radius:7px;"></div>
<span class="t" style="left:1818.30px;top:500.00px;font-size:17.7px;line-height:25px;color:#2a7f43;transform:scaleX(1.0567);font-weight:700;">1/1</span>
<div class="b" style="left:2452.30px;top:494.70px;width:199.50px;height:44.60px;border:1.5px solid #dfe2ee;border-radius:23px;box-sizing:border-box;"></div>
<svg class="b" style="left:2472.40px;top:506.00px;" width="22.00" height="22.00" viewBox="0 0 22 22"><g fill="none" stroke="#1c2b34" stroke-width="1.9"><rect x="1.5" y="1.5" width="12" height="19"/><polyline points="13.5,8.5 20.5,8.5 20.5,20.5 13.5,20.5"/></g><g fill="#1c2b34"><rect x="4.3" y="4.6" width="2.2" height="2.6"/><rect x="8.4" y="4.6" width="2.2" height="2.6"/><rect x="4.3" y="9.4" width="2.2" height="2.6"/><rect x="8.4" y="9.4" width="2.2" height="2.6"/><rect x="4.3" y="14.2" width="2.2" height="2.6"/><rect x="8.4" y="14.2" width="2.2" height="2.6"/><rect x="16" y="11.6" width="2" height="2.4"/><rect x="16" y="15.8" width="2" height="2.4"/></g></svg>
<span class="t" style="left:2508.40px;top:504.00px;font-size:21.17px;line-height:30px;color:#1c2b34;transform:scaleX(1.0153);">10.244.2.152</span>
<div class="b" style="left:3252.00px;top:510.40px;width:20.50px;height:1.80px;background:#8f9ba5;"></div>
<span class="t" style="left:1238.70px;top:583.00px;font-size:21.17px;line-height:30px;color:#4c5b68;transform:scaleX(1.0462);">Overview</span>
<span class="t" style="left:1389.80px;top:583.00px;font-size:21.17px;line-height:30px;color:#1c2b34;transform:scaleX(0.9665);">YAML</span>
<span class="t" style="left:1504.20px;top:583.00px;font-size:21.17px;line-height:30px;color:#4c5b68;transform:scaleX(1.0584);">Metrics</span>
<span class="t" style="left:1636.70px;top:583.00px;font-size:21.17px;line-height:30px;color:#4c5b68;transform:scaleX(1.0790);">Troubleshooter</span>
<span class="t" style="left:1849.20px;top:583.00px;font-size:21.17px;line-height:30px;color:#4c5b68;transform:scaleX(1.0020);">Logs</span>
<span class="t" style="left:1981.00px;top:583.00px;font-size:21.17px;line-height:30px;color:#4c5b68;transform:scaleX(0.9766);">APM</span>
<span class="t" style="left:2113.00px;top:583.00px;font-size:21.17px;line-height:30px;color:#4c5b68;transform:scaleX(1.0370);">Profiles</span>
<span class="t" style="left:2272.60px;top:583.00px;font-size:21.17px;line-height:30px;color:#4c5b68;transform:scaleX(1.0806);">Network</span>
<span class="t" style="left:2443.50px;top:583.00px;font-size:21.17px;line-height:30px;color:#4c5b68;transform:scaleX(0.9904);">Events</span>
<span class="t" style="left:2594.30px;top:583.00px;font-size:21.17px;line-height:30px;color:#4c5b68;transform:scaleX(1.0988);">Monitors</span>
<div class="b" style="left:1909.00px;top:590.70px;width:13.00px;height:13.00px;background:#eaebf3;border-radius:7px;"></div>
<div class="b" style="left:2039.90px;top:590.70px;width:13.00px;height:13.00px;background:#eaebf3;border-radius:7px;"></div>
<div class="b" style="left:2200.00px;top:590.70px;width:13.00px;height:13.00px;background:#eaebf3;border-radius:7px;"></div>
<div class="b" style="left:2370.10px;top:590.70px;width:13.00px;height:13.00px;background:#eaebf3;border-radius:7px;"></div>
<div class="b" style="left:2521.50px;top:590.70px;width:13.00px;height:13.00px;background:#eaebf3;border-radius:7px;"></div>
<div class="b" style="left:1211.60px;top:627.10px;width:2420.90px;height:1.30px;background:#e1e4ee;"></div>
<div class="b" style="left:1388.60px;top:620.60px;width:58.00px;height:6.40px;background:#0a66c2;"></div>
<div class="b" style="left:1237.80px;top:655.30px;width:162.50px;height:44.60px;background:#0a66c2;border-radius:7px 0 0 7px;"></div>
<span class="t" style="left:1255.90px;top:664.00px;font-size:21.17px;line-height:30px;color:#fff;transform:scaleX(1.0336);">View Version</span>
<div class="b" style="left:1400.30px;top:655.30px;width:216.60px;height:44.60px;border:1.5px solid #bfc4e0;border-radius:0 7px 7px 0;box-sizing:border-box;border-left:none;"></div>
<span class="t" style="left:1417.80px;top:664.00px;font-size:21.17px;line-height:30px;color:#1c2b34;transform:scaleX(1.0393);">Compare Versions</span>
<div class="b" style="left:1644.50px;top:655.30px;width:319.50px;height:44.60px;border:1.5px solid #bfc4e0;border-radius:7px;box-sizing:border-box;"></div>
<span class="t" style="left:1659.00px;top:664.00px;font-size:21.17px;line-height:30px;color:#1c2b34;transform:scaleX(1.0491);">Mar 10, 9:06 am (current)</span>
<svg class="b" style="left:1936.00px;top:674.00px;" width="15.50" height="9.00" viewBox="0 0 15 9"><path d="M0.5 0.5H14.5L7.5 8.5Z" fill="#6b7885"/></svg>
<div class="b" style="left:1991.10px;top:659.10px;width:60.30px;height:34.10px;background:#9ea4c2;border-radius:17.1px;"></div>
<div class="b" style="left:1995.30px;top:663.75px;width:24.80px;height:24.80px;background:#fff;border-radius:12.4px;"></div>
<span class="t" style="left:2065.40px;top:664.00px;font-size:21.17px;line-height:30px;color:#1c2b34;transform:scaleX(0.9159);">See</span>
<span class="t" style="left:2106.10px;top:664.00px;font-size:21.17px;line-height:30px;color:#1c2b34;transform:scaleX(1.0796);">compact manifest</span>
<div class="b" style="left:2106.10px;top:690.40px;width:179.10px;height:0.00px;border-top:2px dotted #7d8a97;"></div>
<div class="b" style="left:1237.80px;top:713.50px;width:2032.00px;height:1300.00px;background:#f7f7f8;"></div>
<span class="m" style="left:1275.58px;top:730.00px;color:#1c2b34;">1</span>
<span class="m" style="left:1331.80px;top:730.00px;color:#3063d4;">apiVersion</span>
<span class="m" style="left:1459.05px;top:730.00px;color:#1f8a4c;">:</span>
<span class="m" style="left:1471.77px;top:730.00px;color:#1c2b34;"> v1</span>
<span class="m" style="left:1275.58px;top:762.00px;color:#5e6a86;">2</span>
<span class="m" style="left:1331.80px;top:762.00px;color:#3063d4;">kind</span>
<span class="m" style="left:1382.70px;top:762.00px;color:#1f8a4c;">:</span>
<span class="m" style="left:1395.42px;top:762.00px;color:#1c2b34;"> Pod</span>
<span class="m" style="left:1275.58px;top:795.00px;color:#5e6a86;">3</span>
<svg class="b" style="left:1296.30px;top:792.89px;" width="34.00" height="34.00" viewBox="-17 -17 34 34"><polyline points="-8.5,-4.25 0,4.25 8.5,-4.25" fill="none" stroke="#3c4047" stroke-width="1.6" stroke-linecap="round" stroke-linejoin="round"/></svg>
<span class="m" style="left:1331.80px;top:795.00px;color:#3063d4;">metadata</span>
<span class="m" style="left:1433.60px;top:795.00px;color:#1f8a4c;">:</span>
<span class="m" style="left:1275.58px;top:828.00px;color:#5e6a86;">4</span>
<svg class="b" style="left:1296.30px;top:825.64px;" width="34.00" height="34.00" viewBox="-17 -17 34 34"><polyline points="-8.5,-4.25 0,4.25 8.5,-4.25" fill="none" stroke="#3c4047" stroke-width="1.6" stroke-linecap="round" stroke-linejoin="round"/></svg>
<div class="b" style="left:1330.90px;top:825.64px;width:1.50px;height:32.95px;background:#d6d6da;"></div>
<span class="m" style="left:1357.25px;top:828.00px;color:#3063d4;">annotations</span>
<span class="m" style="left:1497.22px;top:828.00px;color:#1f8a4c;">:</span>
<span class="m" style="left:1275.58px;top:861.00px;color:#5e6a86;">5</span>
<div class="b" style="left:1330.90px;top:858.38px;width:1.50px;height:32.95px;background:#d6d6da;"></div>
<div class="b" style="left:1356.35px;top:858.38px;width:1.50px;height:32.95px;background:#d6d6da;"></div>
<span class="m" style="left:1382.70px;top:861.00px;color:#3063d4;">resource.opentelemetry.io/service.namespace</span>
<span class="m" style="left:1929.88px;top:861.00px;color:#1f8a4c;">:</span>
<span class="m" style="left:1942.60px;top:861.00px;color:#1c2b34;"> otel-demo</span>
<span class="m" style="left:1275.58px;top:893.00px;color:#5e6a86;">6</span>
<div class="b" style="left:1330.90px;top:891.13px;width:1.50px;height:32.95px;background:#d6d6da;"></div>
<span class="m" style="left:1357.25px;top:893.00px;color:#3063d4;">creationTimestamp</span>
<span class="m" style="left:1573.58px;top:893.00px;color:#1f8a4c;">:</span>
<span class="m" style="left:1586.30px;top:893.00px;color:#7a3eb1;"> 2026-03-09T14:04:35Z</span>
<span class="m" style="left:1275.58px;top:926.00px;color:#5e6a86;">7</span>
<div class="b" style="left:1330.90px;top:923.88px;width:1.50px;height:32.95px;background:#d6d6da;"></div>
<span class="m" style="left:1357.25px;top:926.00px;color:#3063d4;">generateName</span>
<span class="m" style="left:1509.95px;top:926.00px;color:#1f8a4c;">:</span>
<span class="m" style="left:1522.67px;top:926.00px;color:#1c2b34;"> frontend-64c5f45788-</span>
<span class="m" style="left:1275.58px;top:959.00px;color:#5e6a86;">8</span>
<div class="b" style="left:1330.90px;top:956.62px;width:1.50px;height:32.95px;background:#d6d6da;"></div>
<span class="m" style="left:1357.25px;top:959.00px;color:#3063d4;">generation</span>
<span class="m" style="left:1484.50px;top:959.00px;color:#1f8a4c;">:</span>
<span class="m" style="left:1497.22px;top:959.00px;color:#7a3eb1;"> 1</span>
<span class="m" style="left:1275.58px;top:992.00px;color:#5e6a86;">9</span>
<svg class="b" style="left:1296.30px;top:989.37px;" width="34.00" height="34.00" viewBox="-17 -17 34 34"><polyline points="-8.5,-4.25 0,4.25 8.5,-4.25" fill="none" stroke="#3c4047" stroke-width="1.6" stroke-linecap="round" stroke-linejoin="round"/></svg>
<div class="b" style="left:1330.90px;top:989.37px;width:1.50px;height:32.95px;background:#d6d6da;"></div>
<span class="m" style="left:1357.25px;top:992.00px;color:#3063d4;">labels</span>
<span class="m" style="left:1433.60px;top:992.00px;color:#1f8a4c;">:</span>
<span class="m" style="left:1262.85px;top:1024.00px;color:#5e6a86;">10</span>
<div class="b" style="left:1330.90px;top:1022.11px;width:1.50px;height:32.95px;background:#d6d6da;"></div>
<div class="b" style="left:1356.35px;top:1022.11px;width:1.50px;height:32.95px;background:#d6d6da;"></div>
<span class="m" style="left:1382.70px;top:1024.00px;color:#3063d4;">app.kubernetes.io/component</span>
<span class="m" style="left:1726.28px;top:1024.00px;color:#1f8a4c;">:</span>
<span class="m" style="left:1739.00px;top:1024.00px;color:#1c2b34;"> frontend</span>
<span class="m" style="left:1262.85px;top:1057.00px;color:#5e6a86;">11</span>
<div class="b" style="left:1330.90px;top:1054.86px;width:1.50px;height:32.95px;background:#d6d6da;"></div>
<div class="b" style="left:1356.35px;top:1054.86px;width:1.50px;height:32.95px;background:#d6d6da;"></div>
<span class="m" style="left:1382.70px;top:1057.00px;color:#3063d4;">app.kubernetes.io/name</span>
<span class="m" style="left:1662.65px;top:1057.00px;color:#1f8a4c;">:</span>
<span class="m" style="left:1675.38px;top:1057.00px;color:#1c2b34;"> frontend</span>
<span class="m" style="left:1262.85px;top:1090.00px;color:#5e6a86;">12</span>
<div class="b" style="left:1330.90px;top:1087.61px;width:1.50px;height:32.95px;background:#d6d6da;"></div>
<div class="b" style="left:1356.35px;top:1087.61px;width:1.50px;height:32.95px;background:#d6d6da;"></div>
<span class="m" style="left:1382.70px;top:1090.00px;color:#3063d4;">app.kubernetes.io/version</span>
<span class="m" style="left:1700.83px;top:1090.00px;color:#1f8a4c;">:</span>
<span class="m" style="left:1713.55px;top:1090.00px;color:#1c2b34;"> 2.2.0</span>
<span class="m" style="left:1262.85px;top:1123.00px;color:#5e6a86;">13</span>
<div class="b" style="left:1330.90px;top:1120.35px;width:1.50px;height:32.95px;background:#d6d6da;"></div>
<div class="b" style="left:1356.35px;top:1120.35px;width:1.50px;height:32.95px;background:#d6d6da;"></div>
<span class="m" style="left:1382.70px;top:1123.00px;color:#3063d4;">opentelemetry.io/name</span>
<span class="m" style="left:1649.92px;top:1123.00px;color:#1f8a4c;">:</span>
<span class="m" style="left:1662.65px;top:1123.00px;color:#1c2b34;"> frontend</span>
<span class="m" style="left:1262.85px;top:1155.00px;color:#5e6a86;">14</span>
<div class="b" style="left:1330.90px;top:1153.10px;width:1.50px;height:32.95px;background:#d6d6da;"></div>
<div class="b" style="left:1356.35px;top:1153.10px;width:1.50px;height:32.95px;background:#d6d6da;"></div>
<span class="m" style="left:1382.70px;top:1155.00px;color:#3063d4;">pod-template-hash</span>
<span class="m" style="left:1599.03px;top:1155.00px;color:#1f8a4c;">:</span>
<span class="m" style="left:1611.75px;top:1155.00px;color:#1c2b34;"> 64c5f45788</span>
<div class="b" style="left:1332.50px;top:1185.84px;width:1937.30px;height:32.75px;background:#eeeef2;"></div>
<span class="m" style="left:1262.85px;top:1188.00px;color:#5e6a86;">15</span>
<svg class="b" style="left:1296.80px;top:1185.64px;" width="34.00" height="34.00" viewBox="-17 -17 34 34"><polyline points="-4.25,-8.5 4.25,0 -4.25,8.5" fill="none" stroke="#3c4047" stroke-width="1.6" stroke-linecap="round" stroke-linejoin="round"/></svg>
<div class="b" style="left:1330.90px;top:1185.84px;width:1.50px;height:32.95px;background:#d6d6da;"></div>
<span class="m" style="left:1357.25px;top:1188.00px;color:#3063d4;">managedFields</span>
<span class="m" style="left:1522.67px;top:1188.00px;color:#1f8a4c;">:</span>
<div class="b" style="left:1537.00px;top:1201.54px;width:2.70px;height:2.70px;background:#5f6c79;"></div>
<div class="b" style="left:1541.40px;top:1201.54px;width:2.70px;height:2.70px;background:#5f6c79;"></div>
<div class="b" style="left:1545.80px;top:1201.54px;width:2.70px;height:2.70px;background:#5f6c79;"></div>
<span class="m" style="left:1250.12px;top:1221.00px;color:#5e6a86;">229</span>
<div class="b" style="left:1330.90px;top:1218.59px;width:1.50px;height:32.95px;background:#d6d6da;"></div>
<span class="m" style="left:1357.25px;top:1221.00px;color:#3063d4;">name</span>
<span class="m" style="left:1408.15px;top:1221.00px;color:#1f8a4c;">:</span>
<span class="m" style="left:1420.88px;top:1221.00px;color:#1c2b34;"> frontend-64c5f45788-29fh6</span>
<span class="m" style="left:1250.12px;top:1254.00px;color:#5e6a86;">230</span>
<div class="b" style="left:1330.90px;top:1251.34px;width:1.50px;height:32.95px;background:#d6d6da;"></div>
<span class="m" style="left:1357.25px;top:1254.00px;color:#3063d4;">namespace</span>
<span class="m" style="left:1471.78px;top:1254.00px;color:#1f8a4c;">:</span>
<span class="m" style="left:1484.50px;top:1254.00px;color:#1c2b34;"> otel-demo</span>
<span class="m" style="left:1250.12px;top:1286.00px;color:#5e6a86;">231</span>
<svg class="b" style="left:1296.30px;top:1284.08px;" width="34.00" height="34.00" viewBox="-17 -17 34 34"><polyline points="-8.5,-4.25 0,4.25 8.5,-4.25" fill="none" stroke="#3c4047" stroke-width="1.6" stroke-linecap="round" stroke-linejoin="round"/></svg>
<div class="b" style="left:1330.90px;top:1284.08px;width:1.50px;height:32.95px;background:#d6d6da;"></div>
<span class="m" style="left:1357.25px;top:1286.00px;color:#3063d4;">ownerReferences</span>
<span class="m" style="left:1548.12px;top:1286.00px;color:#1f8a4c;">:</span>
<span class="m" style="left:1250.12px;top:1319.00px;color:#5e6a86;">232</span>
<svg class="b" style="left:1296.30px;top:1316.83px;" width="34.00" height="34.00" viewBox="-17 -17 34 34"><polyline points="-8.5,-4.25 0,4.25 8.5,-4.25" fill="none" stroke="#3c4047" stroke-width="1.6" stroke-linecap="round" stroke-linejoin="round"/></svg>
<div class="b" style="left:1330.90px;top:1316.83px;width:1.50px;height:32.95px;background:#d6d6da;"></div>
<div class="b" style="left:1356.35px;top:1316.83px;width:1.50px;height:32.95px;background:#d6d6da;"></div>
<span class="m" style="left:1382.70px;top:1319.00px;color:#1f8a4c;">-</span>
<span class="m" style="left:1408.15px;top:1319.00px;color:#3063d4;">apiVersion</span>
<span class="m" style="left:1535.40px;top:1319.00px;color:#1f8a4c;">:</span>
<span class="m" style="left:1548.12px;top:1319.00px;color:#1c2b34;"> apps/v1</span>
<span class="m" style="left:1250.12px;top:1352.00px;color:#5e6a86;">233</span>
<div class="b" style="left:1330.90px;top:1349.57px;width:1.50px;height:32.95px;background:#d6d6da;"></div>
<div class="b" style="left:1356.35px;top:1349.57px;width:1.50px;height:32.95px;background:#d6d6da;"></div>
<div class="b" style="left:1381.80px;top:1349.57px;width:1.50px;height:32.95px;background:#d6d6da;"></div>
<span class="m" style="left:1408.15px;top:1352.00px;color:#3063d4;">blockOwnerDeletion</span>
<span class="m" style="left:1637.20px;top:1352.00px;color:#1f8a4c;">:</span>
<span class="m" style="left:1649.92px;top:1352.00px;color:#d6226b;"> true</span>
<span class="m" style="left:1250.12px;top:1385.00px;color:#5e6a86;">234</span>
<div class="b" style="left:1330.90px;top:1382.32px;width:1.50px;height:32.95px;background:#d6d6da;"></div>
<div class="b" style="left:1356.35px;top:1382.32px;width:1.50px;height:32.95px;background:#d6d6da;"></div>
<div class="b" style="left:1381.80px;top:1382.32px;width:1.50px;height:32.95px;background:#d6d6da;"></div>
<span class="m" style="left:1408.15px;top:1385.00px;color:#3063d4;">controller</span>
<span class="m" style="left:1535.40px;top:1385.00px;color:#1f8a4c;">:</span>
<span class="m" style="left:1548.12px;top:1385.00px;color:#d6226b;"> true</span>
<span class="m" style="left:1250.12px;top:1417.00px;color:#5e6a86;">235</span>
<div class="b" style="left:1330.90px;top:1415.07px;width:1.50px;height:32.95px;background:#d6d6da;"></div>
<div class="b" style="left:1356.35px;top:1415.07px;width:1.50px;height:32.95px;background:#d6d6da;"></div>
<div class="b" style="left:1381.80px;top:1415.07px;width:1.50px;height:32.95px;background:#d6d6da;"></div>
<span class="m" style="left:1408.15px;top:1417.00px;color:#3063d4;">kind</span>
<span class="m" style="left:1459.05px;top:1417.00px;color:#1f8a4c;">:</span>
<span class="m" style="left:1471.77px;top:1417.00px;color:#1c2b34;"> ReplicaSet</span>
<span class="m" style="left:1250.12px;top:1450.00px;color:#5e6a86;">236</span>
<div class="b" style="left:1330.90px;top:1447.81px;width:1.50px;height:32.95px;background:#d6d6da;"></div>
<div class="b" style="left:1356.35px;top:1447.81px;width:1.50px;height:32.95px;background:#d6d6da;"></div>
<div class="b" style="left:1381.80px;top:1447.81px;width:1.50px;height:32.95px;background:#d6d6da;"></div>
<span class="m" style="left:1408.15px;top:1450.00px;color:#3063d4;">name</span>
<span class="m" style="left:1459.05px;top:1450.00px;color:#1f8a4c;">:</span>
<span class="m" style="left:1471.77px;top:1450.00px;color:#1c2b34;"> frontend-64c5f45788</span>
<span class="m" style="left:1250.12px;top:1483.00px;color:#5e6a86;">237</span>
<div class="b" style="left:1330.90px;top:1480.56px;width:1.50px;height:32.95px;background:#d6d6da;"></div>
<div class="b" style="left:1356.35px;top:1480.56px;width:1.50px;height:32.95px;background:#d6d6da;"></div>
<div class="b" style="left:1381.80px;top:1480.56px;width:1.50px;height:32.95px;background:#d6d6da;"></div>
<span class="m" style="left:1408.15px;top:1483.00px;color:#3063d4;">uid</span>
<span class="m" style="left:1446.32px;top:1483.00px;color:#1f8a4c;">:</span>
<span class="m" style="left:1459.05px;top:1483.00px;color:#1c2b34;"> e4db5b3b-fe45-4cf4-be8e-0e20bb214bb3</span>
<span class="m" style="left:1250.12px;top:1516.00px;color:#5e6a86;">238</span>
<div class="b" style="left:1330.90px;top:1513.30px;width:1.50px;height:32.95px;background:#d6d6da;"></div>
<span class="m" style="left:1357.25px;top:1516.00px;color:#3063d4;">resourceVersion</span>
<span class="m" style="left:1548.12px;top:1516.00px;color:#1f8a4c;">:</span>
<span class="m" style="left:1560.85px;top:1516.00px;color:#1c2b34;"> &quot;88512499&quot;</span>
<span class="m" style="left:1250.12px;top:1548.00px;color:#5e6a86;">239</span>
<div class="b" style="left:1330.90px;top:1546.05px;width:1.50px;height:32.95px;background:#d6d6da;"></div>
<span class="m" style="left:1357.25px;top:1548.00px;color:#3063d4;">uid</span>
<span class="m" style="left:1395.42px;top:1548.00px;color:#1f8a4c;">:</span>
<span class="m" style="left:1408.15px;top:1548.00px;color:#1c2b34;"> 9f0504ec-b9e9-483d-b42d-a4051712ec58</span>
<span class="m" style="left:1250.12px;top:1581.00px;color:#5e6a86;">240</span>
<svg class="b" style="left:1296.30px;top:1578.80px;" width="34.00" height="34.00" viewBox="-17 -17 34 34"><polyline points="-8.5,-4.25 0,4.25 8.5,-4.25" fill="none" stroke="#3c4047" stroke-width="1.6" stroke-linecap="round" stroke-linejoin="round"/></svg>
<span class="m" style="left:1331.80px;top:1581.00px;color:#3063d4;">spec</span>
<span class="m" style="left:1382.70px;top:1581.00px;color:#1f8a4c;">:</span>
<span class="m" style="left:1250.12px;top:1614.00px;color:#5e6a86;">241</span>
<svg class="b" style="left:1296.30px;top:1611.54px;" width="34.00" height="34.00" viewBox="-17 -17 34 34"><polyline points="-8.5,-4.25 0,4.25 8.5,-4.25" fill="none" stroke="#3c4047" stroke-width="1.6" stroke-linecap="round" stroke-linejoin="round"/></svg>
<div class="b" style="left:1330.90px;top:1611.54px;width:1.50px;height:32.95px;background:#d6d6da;"></div>
<span class="m" style="left:1357.25px;top:1614.00px;color:#3063d4;">containers</span>
<span class="m" style="left:1484.50px;top:1614.00px;color:#1f8a4c;">:</span>
<span class="m" style="left:1250.12px;top:1647.00px;color:#5e6a86;">242</span>
<svg class="b" style="left:1296.30px;top:1644.29px;" width="34.00" height="34.00" viewBox="-17 -17 34 34"><polyline points="-8.5,-4.25 0,4.25 8.5,-4.25" fill="none" stroke="#3c4047" stroke-width="1.6" stroke-linecap="round" stroke-linejoin="round"/></svg>
<div class="b" style="left:1330.90px;top:1644.29px;width:1.50px;height:32.95px;background:#d6d6da;"></div>
<div class="b" style="left:1356.35px;top:1644.29px;width:1.50px;height:32.95px;background:#d6d6da;"></div>
<span class="m" style="left:1382.70px;top:1647.00px;color:#1f8a4c;">-</span>
<span class="m" style="left:1408.15px;top:1647.00px;color:#3063d4;">env</span>
<span class="m" style="left:1446.33px;top:1647.00px;color:#1f8a4c;">:</span>
<span class="m" style="left:1250.12px;top:1679.00px;color:#5e6a86;">243</span>
<svg class="b" style="left:1296.30px;top:1677.03px;" width="34.00" height="34.00" viewBox="-17 -17 34 34"><polyline points="-8.5,-4.25 0,4.25 8.5,-4.25" fill="none" stroke="#3c4047" stroke-width="1.6" stroke-linecap="round" stroke-linejoin="round"/></svg>
<div class="b" style="left:1330.90px;top:1677.03px;width:1.50px;height:32.95px;background:#d6d6da;"></div>
<div class="b" style="left:1356.35px;top:1677.03px;width:1.50px;height:32.95px;background:#d6d6da;"></div>
<div class="b" style="left:1381.80px;top:1677.03px;width:1.50px;height:32.95px;background:#d6d6da;"></div>
<div class="b" style="left:1407.25px;top:1677.03px;width:1.50px;height:32.95px;background:#d6d6da;"></div>
<span class="m" style="left:1433.60px;top:1679.00px;color:#1f8a4c;">-</span>
<span class="m" style="left:1459.05px;top:1679.00px;color:#3063d4;">name</span>
<span class="m" style="left:1509.95px;top:1679.00px;color:#1f8a4c;">:</span>
<span class="m" style="left:1522.67px;top:1679.00px;color:#1c2b34;"> _K8S_NODE_NAME</span>
<span class="m" style="left:1250.12px;top:1712.00px;color:#5e6a86;">244</span>
<svg class="b" style="left:1296.30px;top:1709.78px;" width="34.00" height="34.00" viewBox="-17 -17 34 34"><polyline points="-8.5,-4.25 0,4.25 8.5,-4.25" fill="none" stroke="#3c4047" stroke-width="1.6" stroke-linecap="round" stroke-linejoin="round"/></svg>
<div class="b" style="left:1330.90px;top:1709.78px;width:1.50px;height:32.95px;background:#d6d6da;"></div>
<div class="b" style="left:1356.35px;top:1709.78px;width:1.50px;height:32.95px;background:#d6d6da;"></div>
<div class="b" style="left:1381.80px;top:1709.78px;width:1.50px;height:32.95px;background:#d6d6da;"></div>
<div class="b" style="left:1407.25px;top:1709.78px;width:1.50px;height:32.95px;background:#d6d6da;"></div>
<div class="b" style="left:1432.70px;top:1709.78px;width:1.50px;height:32.95px;background:#d6d6da;"></div>
<span class="m" style="left:1459.05px;top:1712.00px;color:#3063d4;">valueFrom</span>
<span class="m" style="left:1573.58px;top:1712.00px;color:#1f8a4c;">:</span>
<span class="m" style="left:1250.12px;top:1745.00px;color:#5e6a86;">245</span>
<svg class="b" style="left:1296.30px;top:1742.53px;" width="34.00" height="34.00" viewBox="-17 -17 34 34"><polyline points="-8.5,-4.25 0,4.25 8.5,-4.25" fill="none" stroke="#3c4047" stroke-width="1.6" stroke-linecap="round" stroke-linejoin="round"/></svg>
<div class="b" style="left:1330.90px;top:1742.53px;width:1.50px;height:32.95px;background:#d6d6da;"></div>
<div class="b" style="left:1356.35px;top:1742.53px;width:1.50px;height:32.95px;background:#d6d6da;"></div>
<div class="b" style="left:1381.80px;top:1742.53px;width:1.50px;height:32.95px;background:#d6d6da;"></div>
<div class="b" style="left:1407.25px;top:1742.53px;width:1.50px;height:32.95px;background:#d6d6da;"></div>
<div class="b" style="left:1432.70px;top:1742.53px;width:1.50px;height:32.95px;background:#d6d6da;"></div>
<div class="b" style="left:1458.15px;top:1742.53px;width:1.50px;height:32.95px;background:#d6d6da;"></div>
<span class="m" style="left:1484.50px;top:1745.00px;color:#3063d4;">fieldRef</span>
<span class="m" style="left:1586.30px;top:1745.00px;color:#1f8a4c;">:</span>
<span class="m" style="left:1250.12px;top:1778.00px;color:#5e6a86;">246</span>
<div class="b" style="left:1330.90px;top:1775.27px;width:1.50px;height:32.95px;background:#d6d6da;"></div>
<div class="b" style="left:1356.35px;top:1775.27px;width:1.50px;height:32.95px;background:#d6d6da;"></div>
<div class="b" style="left:1381.80px;top:1775.27px;width:1.50px;height:32.95px;background:#d6d6da;"></div>
<div class="b" style="left:1407.25px;top:1775.27px;width:1.50px;height:32.95px;background:#d6d6da;"></div>
<div class="b" style="left:1432.70px;top:1775.27px;width:1.50px;height:32.95px;background:#d6d6da;"></div>
<div class="b" style="left:1458.15px;top:1775.27px;width:1.50px;height:32.95px;background:#d6d6da;"></div>
<div class="b" style="left:1483.60px;top:1775.27px;width:1.50px;height:32.95px;background:#d6d6da;"></div>
<span class="m" style="left:1509.95px;top:1778.00px;color:#3063d4;">apiVersion</span>
<span class="m" style="left:1637.20px;top:1778.00px;color:#1f8a4c;">:</span>
<span class="m" style="left:1649.92px;top:1778.00px;color:#1c2b34;"> v1</span>
<span class="m" style="left:1250.12px;top:1810.00px;color:#5e6a86;">247</span>
<div class="b" style="left:1330.90px;top:1808.02px;width:1.50px;height:32.95px;background:#d6d6da;"></div>
<div class="b" style="left:1356.35px;top:1808.02px;width:1.50px;height:32.95px;background:#d6d6da;"></div>
<div class="b" style="left:1381.80px;top:1808.02px;width:1.50px;height:32.95px;background:#d6d6da;"></div>
<div class="b" style="left:1407.25px;top:1808.02px;width:1.50px;height:32.95px;background:#d6d6da;"></div>
<div class="b" style="left:1432.70px;top:1808.02px;width:1.50px;height:32.95px;background:#d6d6da;"></div>
<div class="b" style="left:1458.15px;top:1808.02px;width:1.50px;height:32.95px;background:#d6d6da;"></div>
<div class="b" style="left:1483.60px;top:1808.02px;width:1.50px;height:32.95px;background:#d6d6da;"></div>
<span class="m" style="left:1509.95px;top:1810.00px;color:#3063d4;">fieldPath</span>
<span class="m" style="left:1624.48px;top:1810.00px;color:#1f8a4c;">:</span>
<span class="m" style="left:1637.20px;top:1810.00px;color:#1c2b34;"> spec.nodeName</span>
<span class="m" style="left:1250.12px;top:1843.00px;color:#5e6a86;">248</span>
<svg class="b" style="left:1296.30px;top:1840.76px;" width="34.00" height="34.00" viewBox="-17 -17 34 34"><polyline points="-8.5,-4.25 0,4.25 8.5,-4.25" fill="none" stroke="#3c4047" stroke-width="1.6" stroke-linecap="round" stroke-linejoin="round"/></svg>
<div class="b" style="left:1330.90px;top:1840.76px;width:1.50px;height:32.95px;background:#d6d6da;"></div>
<div class="b" style="left:1356.35px;top:1840.76px;width:1.50px;height:32.95px;background:#d6d6da;"></div>
<div class="b" style="left:1381.80px;top:1840.76px;width:1.50px;height:32.95px;background:#d6d6da;"></div>
<div class="b" style="left:1407.25px;top:1840.76px;width:1.50px;height:32.95px;background:#d6d6da;"></div>
<span class="m" style="left:1433.60px;top:1843.00px;color:#1f8a4c;">-</span>
<span class="m" style="left:1459.05px;top:1843.00px;color:#3063d4;">name</span>
<span class="m" style="left:1509.95px;top:1843.00px;color:#1f8a4c;">:</span>
<span class="m" style="left:1522.67px;top:1843.00px;color:#1c2b34;"> _K8S_NAMESPACE</span>
<span class="m" style="left:1250.12px;top:1876.00px;color:#5e6a86;">249</span>
<svg class="b" style="left:1296.30px;top:1873.51px;" width="34.00" height="34.00" viewBox="-17 -17 34 34"><polyline points="-8.5,-4.25 0,4.25 8.5,-4.25" fill="none" stroke="#3c4047" stroke-width="1.6" stroke-linecap="round" stroke-linejoin="round"/></svg>
<div class="b" style="left:1330.90px;top:1873.51px;width:1.50px;height:32.95px;background:#d6d6da;"></div>
<div class="b" style="left:1356.35px;top:1873.51px;width:1.50px;height:32.95px;background:#d6d6da;"></div>
<div class="b" style="left:1381.80px;top:1873.51px;width:1.50px;height:32.95px;background:#d6d6da;"></div>
<div class="b" style="left:1407.25px;top:1873.51px;width:1.50px;height:32.95px;background:#d6d6da;"></div>
<div class="b" style="left:1432.70px;top:1873.51px;width:1.50px;height:32.95px;background:#d6d6da;"></div>
<span class="m" style="left:1459.05px;top:1876.00px;color:#3063d4;">valueFrom</span>
<span class="m" style="left:1573.58px;top:1876.00px;color:#1f8a4c;">:</span>
<span class="m" style="left:1250.12px;top:1909.00px;color:#5e6a86;">250</span>
<svg class="b" style="left:1296.30px;top:1906.26px;" width="34.00" height="34.00" viewBox="-17 -17 34 34"><polyline points="-8.5,-4.25 0,4.25 8.5,-4.25" fill="none" stroke="#3c4047" stroke-width="1.6" stroke-linecap="round" stroke-linejoin="round"/></svg>
<div class="b" style="left:1330.90px;top:1906.26px;width:1.50px;height:32.95px;background:#d6d6da;"></div>
<div class="b" style="left:1356.35px;top:1906.26px;width:1.50px;height:32.95px;background:#d6d6da;"></div>
<div class="b" style="left:1381.80px;top:1906.26px;width:1.50px;height:32.95px;background:#d6d6da;"></div>
<div class="b" style="left:1407.25px;top:1906.26px;width:1.50px;height:32.95px;background:#d6d6da;"></div>
<div class="b" style="left:1432.70px;top:1906.26px;width:1.50px;height:32.95px;background:#d6d6da;"></div>
<div class="b" style="left:1458.15px;top:1906.26px;width:1.50px;height:32.95px;background:#d6d6da;"></div>
<span class="m" style="left:1484.50px;top:1909.00px;color:#3063d4;">fieldRef</span>
<span class="m" style="left:1586.30px;top:1909.00px;color:#1f8a4c;">:</span>
<span class="t" style="left:3342.00px;top:723.00px;font-size:20.65px;line-height:29px;color:#1c2b34;transform:scaleX(1.0246);font-weight:700;">Api Version</span>
<span class="t" style="left:3342.00px;top:769.00px;font-size:20.65px;line-height:29px;color:#1c2b34;transform:scaleX(0.9983);font-weight:700;">Kind</span>
<svg class="b" style="left:3303.20px;top:813.26px;" width="31.00" height="31.00" viewBox="-15.5 -15.5 31.0 31.0"><polyline points="-7.75,-3.875 0,3.875 7.75,-3.875" fill="none" stroke="#1c2b34" stroke-width="1.9" stroke-linecap="round" stroke-linejoin="round"/></svg>
<span class="t" style="left:3342.00px;top:814.00px;font-size:20.65px;line-height:29px;color:#1c2b34;transform:scaleX(1.1083);font-weight:700;">Metadata</span>
<svg class="b" style="left:3331.20px;top:860.39px;" width="29.00" height="29.00" viewBox="-14.5 -14.5 29.0 29.0"><polyline points="-3.625,-7.25 3.625,0 -3.625,7.25" fill="none" stroke="#1c2b34" stroke-width="1.9" stroke-linecap="round" stroke-linejoin="round"/></svg>
<span class="t" style="left:3368.80px;top:860.00px;font-size:21.17px;line-height:30px;color:#1c2b34;transform:scaleX(1.0804);">Annotations</span>
<span class="t" style="left:3368.80px;top:906.00px;font-size:21.17px;line-height:30px;color:#1c2b34;transform:scaleX(1.0632);">Creation Timestamp</span>
<span class="t" style="left:3368.80px;top:952.00px;font-size:21.17px;line-height:30px;color:#1c2b34;transform:scaleX(1.0437);">Generate Name</span>
<span class="t" style="left:3368.80px;top:998.00px;font-size:21.17px;line-height:30px;color:#1c2b34;transform:scaleX(1.0645);">Generation</span>
<svg class="b" style="left:3331.20px;top:1043.71px;" width="29.00" height="29.00" viewBox="-14.5 -14.5 29.0 29.0"><polyline points="-3.625,-7.25 3.625,0 -3.625,7.25" fill="none" stroke="#1c2b34" stroke-width="1.9" stroke-linecap="round" stroke-linejoin="round"/></svg>
<span class="t" style="left:3368.80px;top:1043.00px;font-size:21.17px;line-height:30px;color:#1c2b34;transform:scaleX(1.0019);">Labels</span>
<svg class="b" style="left:3331.20px;top:1089.54px;" width="29.00" height="29.00" viewBox="-14.5 -14.5 29.0 29.0"><polyline points="-3.625,-7.25 3.625,0 -3.625,7.25" fill="none" stroke="#1c2b34" stroke-width="1.9" stroke-linecap="round" stroke-linejoin="round"/></svg>
<span class="t" style="left:3368.80px;top:1089.00px;font-size:21.17px;line-height:30px;color:#1c2b34;transform:scaleX(1.0423);">Managed Fields</span>
<span class="t" style="left:3368.80px;top:1135.00px;font-size:21.17px;line-height:30px;color:#1c2b34;transform:scaleX(1.0448);">Name</span>
<span class="t" style="left:3368.80px;top:1181.00px;font-size:21.17px;line-height:30px;color:#1c2b34;transform:scaleX(1.0313);">Namespace</span>
<svg class="b" style="left:3331.20px;top:1227.03px;" width="29.00" height="29.00" viewBox="-14.5 -14.5 29.0 29.0"><polyline points="-3.625,-7.25 3.625,0 -3.625,7.25" fill="none" stroke="#1c2b34" stroke-width="1.9" stroke-linecap="round" stroke-linejoin="round"/></svg>
<span class="t" style="left:3368.80px;top:1227.00px;font-size:21.17px;line-height:30px;color:#1c2b34;transform:scaleX(1.0397);">Owner References</span>
<span class="t" style="left:3368.80px;top:1273.00px;font-size:21.17px;line-height:30px;color:#1c2b34;transform:scaleX(1.0293);">Resource Version</span>
<span class="t" style="left:3368.80px;top:1318.00px;font-size:21.17px;line-height:30px;color:#1c2b34;transform:scaleX(1.0389);">Uid</span>
<svg class="b" style="left:3303.20px;top:1363.22px;" width="31.00" height="31.00" viewBox="-15.5 -15.5 31.0 31.0"><polyline points="-7.75,-3.875 0,3.875 7.75,-3.875" fill="none" stroke="#1c2b34" stroke-width="1.9" stroke-linecap="round" stroke-linejoin="round"/></svg>
<span class="t" style="left:3342.00px;top:1364.00px;font-size:20.65px;line-height:29px;color:#1c2b34;transform:scaleX(0.9624);font-weight:700;">Spec</span>
<svg class="b" style="left:3331.20px;top:1410.35px;" width="29.00" height="29.00" viewBox="-14.5 -14.5 29.0 29.0"><polyline points="-3.625,-7.25 3.625,0 -3.625,7.25" fill="none" stroke="#1c2b34" stroke-width="1.9" stroke-linecap="round" stroke-linejoin="round"/></svg>
<span class="t" style="left:3368.80px;top:1410.00px;font-size:21.17px;line-height:30px;color:#1c2b34;transform:scaleX(1.0549);">Containers</span>
<span class="t" style="left:3368.80px;top:1456.00px;font-size:21.17px;line-height:30px;color:#1c2b34;transform:scaleX(1.0150);">Dns Policy</span>
<span class="t" style="left:3368.80px;top:1502.00px;font-size:21.17px;line-height:30px;color:#1c2b34;transform:scaleX(1.0142);">Enable Service Links</span>
<span class="t" style="left:3368.80px;top:1548.00px;font-size:21.17px;line-height:30px;color:#1c2b34;transform:scaleX(1.0490);">Node Name</span>
<span class="t" style="left:3368.80px;top:1593.00px;font-size:21.17px;line-height:30px;color:#1c2b34;transform:scaleX(1.0609);">Preemption Policy</span>
<span class="t" style="left:3368.80px;top:1639.00px;font-size:21.17px;line-height:30px;color:#1c2b34;transform:scaleX(1.1007);">Priority</span>
<span class="t" style="left:3368.80px;top:1685.00px;font-size:21.17px;line-height:30px;color:#1c2b34;transform:scaleX(1.0338);">Restart Policy</span>
<span class="t" style="left:3368.80px;top:1731.00px;font-size:21.17px;line-height:30px;color:#1c2b34;transform:scaleX(1.0432);">Scheduler Name</span>
<span class="t" style="left:3368.80px;top:1777.00px;font-size:21.17px;line-height:30px;color:#1c2b34;transform:scaleX(1.0495);">Security Context</span>
<span class="t" style="left:3368.80px;top:1823.00px;font-size:21.17px;line-height:30px;color:#1c2b34;transform:scaleX(1.0343);">Service Account</span>
<span class="t" style="left:3368.80px;top:1868.00px;font-size:21.17px;line-height:30px;color:#1c2b34;transform:scaleX(1.0413);">Service Account Name</span>
<span class="t" style="left:3368.80px;top:1914.00px;font-size:21.17px;line-height:30px;color:#1c2b34;transform:scaleX(1.0532);">Termination Grace Peri</span>
</body></html>
